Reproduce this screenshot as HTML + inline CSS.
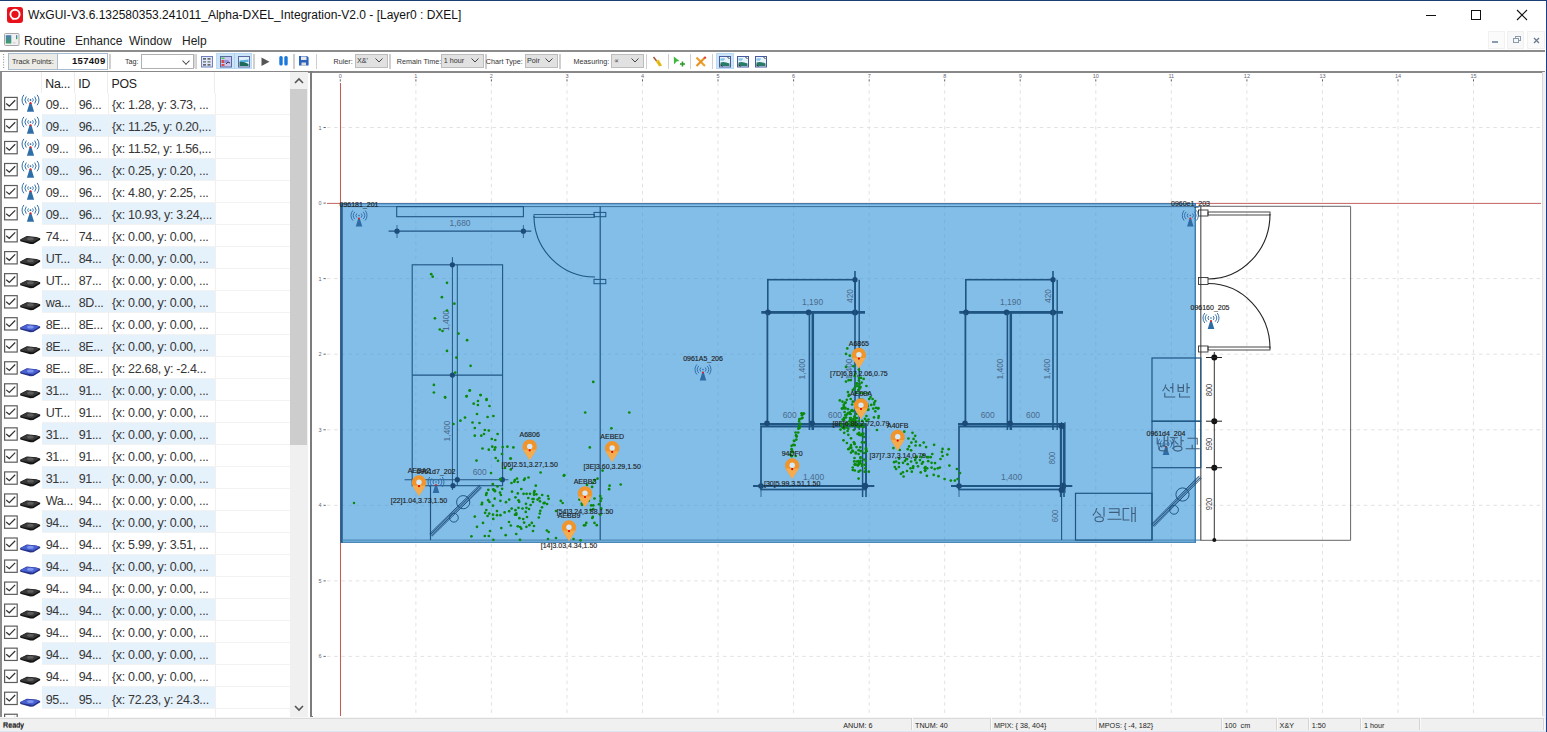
<!DOCTYPE html>
<html><head><meta charset="utf-8">
<style>
*{box-sizing:border-box}
html,body{margin:0;padding:0;width:1547px;height:732px;overflow:hidden;background:#fff;font-family:"Liberation Sans",sans-serif;color:#000}
.abs{position:absolute}
#titlebar{left:0;top:0;width:1547px;height:30px;background:#fff;border-top:1px solid #1c3f73}
#rborder{left:1546px;top:0;width:1px;height:732px;background:#1a3d8f}
.menu{position:absolute;top:34px;font-size:12px;color:#222}
.tb{position:absolute;font-size:7.2px;color:#333;top:57px}
.sep{position:absolute;top:54px;width:1px;height:15px;background:#c8c8c8}
.combo{position:absolute;top:54px;height:15px;background:#e1e1e1;border:1px solid #c4c4c4;font-size:7.2px;color:#222;padding:2px 0 0 2px}
.chev{position:absolute;right:4px;top:3px;width:6px;height:6px;border-right:1px solid #444;border-bottom:1px solid #444;transform:rotate(45deg) scale(.9)}
#list{left:2px;top:72px;width:288px;height:645px;overflow:hidden;background:#fff}
.row{position:absolute;left:0;width:288px;height:22.07px;font-size:11.5px;color:#222}
.row .hl{position:absolute;left:40px;top:0;width:173px;height:100%;background:#e5f1fb}
.row .t{position:absolute;top:4px;white-space:nowrap}
.cb{position:absolute;left:2px;top:5px;width:13px;height:13px;border:1px solid #333;background:#fff}
.cb:after{content:"";position:absolute;left:3px;top:0px;width:4px;height:8px;border-right:1.3px solid #333;border-bottom:1.3px solid #333;transform:rotate(45deg)}
.status{position:absolute;top:720px;font-size:7.2px;color:#222}
.ssep{position:absolute;top:718px;width:1px;height:12px;background:#d6d6d6}
</style></head><body>
<div id="titlebar" class="abs"></div>
<div id="rborder" class="abs"></div>
<!-- app icon -->
<svg class="abs" style="left:7px;top:7px" width="16" height="16"><rect x="0" y="0" width="16" height="16" rx="3" fill="#e8101a"/><circle cx="8" cy="7.3" r="4.6" fill="none" stroke="#fff" stroke-width="1.9"/><path d="M4.6,10.2 L5.8,13.3 L7.6,11.6Z" fill="#fff"/></svg>
<div class="abs" style="left:28px;top:7.5px;font-size:12px;color:#111;white-space:nowrap">WxGUI-V3.6.132580353.241011_Alpha-DXEL_Integration-V2.0 - [Layer0 : DXEL]</div>
<!-- window controls -->
<div class="abs" style="left:1426px;top:15px;width:10px;height:1px;background:#111"></div>
<div class="abs" style="left:1471px;top:10px;width:10px;height:10px;border:1px solid #111"></div>
<svg class="abs" style="left:1516px;top:9px" width="12" height="12"><path d="M1 1L11 11M11 1L1 11" stroke="#111" stroke-width="1.1"/></svg>

<!-- menu -->
<svg class="abs" style="left:4px;top:33px" width="16" height="13"><defs><linearGradient id="mg" x1="0" y1="0" x2="0" y2="1"><stop offset="0" stop-color="#4a7fb5"/><stop offset="1" stop-color="#3e9e62"/></linearGradient><linearGradient id="mg2" x1="0" y1="0" x2="0" y2="1"><stop offset="0" stop-color="#3a7ad0"/><stop offset="1" stop-color="#3eb040"/></linearGradient></defs><rect x="0.5" y="0.5" width="14.5" height="12" rx="1" fill="#f0f0f0" stroke="#a8a8a8"/><rect x="1.8" y="2.2" width="5.5" height="8.3" fill="url(#mg)"/><rect x="12" y="2.2" width="1.3" height="4" fill="url(#mg2)"/><rect x="9" y="9.5" width="2.5" height="0.8" fill="#bbb"/></svg>
<div class="menu" style="left:24px">Routine</div>
<div class="menu" style="left:75px">Enhance</div>
<div class="menu" style="left:129px">Window</div>
<div class="menu" style="left:182px">Help</div>
<div class="abs" style="left:1492px;top:41px;width:6px;height:2px;background:#8a9bb0"></div>
<div class="abs" style="left:1488px;top:31px;width:17px;height:18px;background:#fbfbfb;border:1px solid #f1f1f1"></div><div class="abs" style="left:1507px;top:31px;width:17px;height:18px;background:#f8f8f8;border:1px solid #f0f0f0"></div><div class="abs" style="left:1527px;top:31px;width:18px;height:18px;background:#fbfbfb;border:1px solid #f1f1f1"></div>
<div class="abs" style="left:1492px;top:41px;width:6px;height:2px;background:#8a9bb0"></div>
<svg class="abs" style="left:1513px;top:36px" width="9" height="8"><rect x="2.5" y="0.5" width="5" height="4" fill="none" stroke="#8a9bb0"/><rect x="0.5" y="2.5" width="5" height="4" fill="#f8f8f8" stroke="#8a9bb0"/></svg>
<svg class="abs" style="left:1533px;top:37px" width="7" height="7"><path d="M1 1L6 6M6 1L1 6" stroke="#6a7b90" stroke-width="1.3"/></svg>
<div class="abs" style="left:0;top:50px;width:1545px;height:2px;background:#8c8c8c"></div>

<!-- toolbar -->
<div class="abs" style="left:8px;top:53px;width:100px;height:17px;border:1px solid #a8bdd4;background:#fff"></div>
<div class="abs" style="left:9px;top:54px;width:49px;height:15px;background:#ecebe5;border-right:1px solid #a8bdd4"></div>
<div class="tb" style="left:12px">Track Points:</div>
<div class="abs" style="left:72px;top:55px;font-size:9.5px;font-weight:bold;color:#111;letter-spacing:.3px">157409</div>
<div class="sep" style="left:109px"></div>
<div class="tb" style="left:125px">Tag:</div>
<div class="abs" style="left:141px;top:54px;width:53px;height:15px;background:#fff;border:1px solid #b0b0b0"><div class="chev"></div></div>
<div class="sep" style="left:195px;background:#bbb"></div>
<svg class="abs" style="left:2px;top:53px" width="4" height="17"><g fill="#9a9a9a"><rect x="1" y="1.0" width="1.2" height="1"/><rect x="1" y="3.6" width="1.2" height="1"/><rect x="1" y="6.2" width="1.2" height="1"/><rect x="1" y="8.8" width="1.2" height="1"/><rect x="1" y="11.4" width="1.2" height="1"/><rect x="1" y="14.0" width="1.2" height="1"/></g></svg>
<div class="abs" style="left:109.2px;top:54px;width:1.5px;height:15px;background:#cfcfcf"></div>
<div class="abs" style="left:195.3px;top:54px;width:1.5px;height:15px;background:#cfcfcf"></div>
<div class="abs" style="left:193.8px;top:54px;width:2px;height:14px;background:#d8d8d8"></div>
<svg class="abs" style="left:201px;top:55.5px" width="12" height="12"><rect x="0.5" y="0.5" width="11" height="10.5" fill="#dfe8f8" stroke="#6f7fc0"/><g fill="#333"><rect x="2" y="2.3" width="3" height="1.2"/><rect x="6.5" y="2.3" width="3" height="1.2"/><rect x="2" y="5.3" width="3" height="1.2" fill="#666"/><rect x="6.5" y="5.3" width="3" height="1.2" fill="#666"/><rect x="2" y="8.3" width="3" height="1.2"/><rect x="6.5" y="8.3" width="3" height="1.2"/></g></svg>
<div class="abs" style="left:216px;top:52.8px;width:36px;height:16.6px;background:#cce4f7;border:1px solid #bbdaf5"></div>
<div class="abs" style="left:234.3px;top:53px;width:0.8px;height:16px;background:#b0d2f2"></div>
<svg class="abs" style="left:219.5px;top:55.5px" width="12" height="12"><rect x="0.5" y="0.5" width="11" height="10.5" fill="#c8c8f0" stroke="#5a6aa0"/><rect x="1.5" y="1.5" width="3" height="1.5" fill="#4ad04a"/><rect x="1.5" y="4" width="3" height="3" fill="#e04848"/><rect x="4.5" y="4" width="4" height="3" fill="#8a9ae8"/><rect x="1.5" y="8" width="3" height="2" fill="#e04848"/><path d="M6,8 L8,6 L10,7" stroke="#333" stroke-width="1" fill="none"/></svg>
<svg class="abs" style="left:237.5px;top:55.5px" width="12" height="12"><rect x="0.5" y="0.5" width="11" height="10.5" fill="#dff0fa" stroke="#5a6aa0"/><path d="M1.5,4.5 L10.5,3.5 L10.5,6 L1.5,6Z" fill="#5ab0e0"/><path d="M1.5,6 Q5,5 10.5,8 L10.5,10 L1.5,10Z" fill="#1e6a5a"/></svg>
<div class="abs" style="left:253.3px;top:54px;width:1.5px;height:15px;background:#cfcfcf"></div>
<svg class="abs" style="left:260.5px;top:56.5px" width="9" height="10"><path d="M0.5,0.5 L8.5,4.7 L0.5,9Z" fill="#555"/></svg>
<svg class="abs" style="left:278.5px;top:56.3px" width="10" height="10"><rect x="0.3" y="0" width="3.4" height="9.6" rx="1.5" fill="#1a78dc"/><rect x="5.3" y="0" width="3.4" height="9.6" rx="1.5" fill="#1a78dc"/></svg>
<div class="abs" style="left:293.3px;top:54px;width:1.5px;height:15px;background:#cfcfcf"></div>
<svg class="abs" style="left:299.3px;top:56.3px" width="10" height="10"><path d="M0,0 H8 L9.6,1.6 V9.6 H0Z" fill="#2a62c0"/><rect x="2" y="0.5" width="5.5" height="3.5" fill="#e8e8e8"/><rect x="2.5" y="6.5" width="4.5" height="3" fill="#ddd"/></svg>
<div class="abs" style="left:315.5px;top:54px;width:1.5px;height:15px;background:#cfcfcf"></div>
<div class="abs" style="left:333.5px;top:57px;font-size:7.2px;color:#333;white-space:nowrap">Ruler:</div>
<div class="abs" style="left:354.5px;top:53.5px;width:33.5px;height:14.5px;background:#e1e1e1;border:1px solid #bcbcbc"></div>
<div class="abs" style="left:357.0px;top:55.6px;font-size:7.2px;color:#333;white-space:nowrap">X&amp;'</div>
<svg class="abs" style="left:374px;top:57px" width="10" height="7"><path d="M1.5,1.5 L5,5 L8.5,1.5" stroke="#444" stroke-width="1" fill="none"/></svg>
<div class="abs" style="left:389.3px;top:54px;width:1.5px;height:15px;background:#cfcfcf"></div>
<div class="abs" style="left:396.8px;top:57px;font-size:7.2px;color:#333;white-space:nowrap">Remain Time:</div>
<div class="abs" style="left:441.3px;top:53.5px;width:42.69999999999999px;height:14.5px;background:#e1e1e1;border:1px solid #bcbcbc"></div>
<div class="abs" style="left:443.8px;top:55.6px;font-size:7.2px;color:#333;white-space:nowrap">1 hour</div>
<svg class="abs" style="left:470px;top:57px" width="10" height="7"><path d="M1.5,1.5 L5,5 L8.5,1.5" stroke="#444" stroke-width="1" fill="none"/></svg>
<div class="abs" style="left:485.2px;top:54px;width:1.5px;height:15px;background:#cfcfcf"></div>
<div class="abs" style="left:485.8px;top:57px;font-size:7.2px;color:#333;white-space:nowrap">Chart Type:</div>
<div class="abs" style="left:524.5px;top:53.5px;width:33.5px;height:14.5px;background:#e1e1e1;border:1px solid #bcbcbc"></div>
<div class="abs" style="left:527.0px;top:55.6px;font-size:7.2px;color:#333;white-space:nowrap">Poir</div>
<svg class="abs" style="left:544px;top:57px" width="10" height="7"><path d="M1.5,1.5 L5,5 L8.5,1.5" stroke="#444" stroke-width="1" fill="none"/></svg>
<div class="abs" style="left:559px;top:54px;width:1.5px;height:15px;background:#cfcfcf"></div>
<div class="abs" style="left:573.6px;top:57px;font-size:7.2px;color:#333;white-space:nowrap">Measuring:</div>
<div class="abs" style="left:611px;top:53.5px;width:33px;height:14.5px;background:#e1e1e1;border:1px solid #bcbcbc"></div>
<div class="abs" style="left:613.5px;top:55.6px;font-size:7.2px;color:#333;white-space:nowrap">∝</div>
<svg class="abs" style="left:630px;top:57px" width="10" height="7"><path d="M1.5,1.5 L5,5 L8.5,1.5" stroke="#444" stroke-width="1" fill="none"/></svg>
<div class="abs" style="left:645.8px;top:54px;width:1.5px;height:15px;background:#cfcfcf"></div>
<svg class="abs" style="left:651.5px;top:55.5px" width="11" height="11"><path d="M1.5,1 L5,5.5" stroke="#a0522d" stroke-width="1.4"/><path d="M3.5,5 L6.8,3.8 L10,9.5 L7,10.5 Z" fill="#e8c020"/><path d="M6,6 L9,10" stroke="#c8a010" stroke-width="0.6"/></svg>
<div class="abs" style="left:667.6px;top:54px;width:1.5px;height:15px;background:#cfcfcf"></div>
<svg class="abs" style="left:672.5px;top:56px" width="14" height="11"><path d="M0.8,0.5 L6.5,5 L3.5,5.5 L1,8.5Z" fill="#3cb83c"/><path d="M9.5,5.5 V10.5 M7,8 H12" stroke="#2a9a2a" stroke-width="1.6"/></svg>
<div class="abs" style="left:689.6px;top:54px;width:1.5px;height:15px;background:#cfcfcf"></div>
<svg class="abs" style="left:695.3px;top:55.5px" width="12" height="12"><path d="M1.5,1.5 L10,10" stroke="#f0a030" stroke-width="2.2"/><path d="M10,1.5 L1.5,10" stroke="#e89020" stroke-width="2.2"/><circle cx="10" cy="1.6" r="1.2" fill="#e04040"/></svg>
<div class="abs" style="left:711.8px;top:54px;width:1.5px;height:15px;background:#cfcfcf"></div>
<div class="abs" style="left:715.8px;top:52.7px;width:18px;height:16.3px;background:#cce4f7;border:1px solid #bbdaf5"></div>
<svg class="abs" style="left:719.2px;top:55.5px" width="12" height="12"><rect x="0.5" y="0.5" width="11" height="10.5" fill="#e8f4fb" stroke="#4a5aa0"/><path d="M1.5,3 H6 M1.5,4 H5" stroke="#5ab0e0" stroke-width="0.9"/><path d="M1.5,6.5 Q5,5 10.5,7.5 L10.5,10 L1.5,10Z" fill="#2a7a6a"/><path d="M8.5,1 L10.5,3 M1.5,9 L3.5,10.5" stroke="#222" stroke-width="0.9"/></svg>
<svg class="abs" style="left:737px;top:55.5px" width="12" height="12"><rect x="0.5" y="0.5" width="11" height="10.5" fill="#e8f4fb" stroke="#4a5aa0"/><path d="M1.5,3 H6 M1.5,4 H5" stroke="#5ab0e0" stroke-width="0.9"/><path d="M1.5,6.5 Q5,5 10.5,7.5 L10.5,10 L1.5,10Z" fill="#2a7a6a"/><path d="M8.5,1 L10.5,3 M1.5,9 L3.5,10.5" stroke="#222" stroke-width="0.9"/></svg>
<svg class="abs" style="left:754.8px;top:55.5px" width="12" height="12"><rect x="0.5" y="0.5" width="11" height="10.5" fill="#e8f4fb" stroke="#4a5aa0"/><path d="M1.5,3 H6 M1.5,4 H5" stroke="#5ab0e0" stroke-width="0.9"/><path d="M1.5,6.5 Q5,5 10.5,7.5 L10.5,10 L1.5,10Z" fill="#2a7a6a"/><path d="M8.5,1 L10.5,3 M1.5,9 L3.5,10.5" stroke="#222" stroke-width="0.9"/></svg>
<div class="abs" style="left:0;top:71px;width:1545px;height:2px;background:#888"></div>

<!-- left list -->
<div class="abs" style="left:0;top:72px;width:2px;height:645px;background:#8c8c8c"></div>
<div id="list" class="abs"></div><div class="abs" style="left:0;top:0;width:290px;height:717px;overflow:hidden"><div class="abs" style="left:2px;top:72px;width:288px;height:20.5px;background:#fff"></div>
<div class="abs" style="left:45.3px;top:77px;font-size:12.3px;letter-spacing:-0.2px;color:#222">Na...</div>
<div class="abs" style="left:78.3px;top:77px;font-size:12.3px;letter-spacing:-0.2px;color:#222">ID</div>
<div class="abs" style="left:111.5px;top:77px;font-size:12.3px;letter-spacing:-0.2px;color:#222">POS</div>
<div class="abs" style="left:41px;top:72px;width:1px;height:21px;background:#ececec"></div>
<div class="abs" style="left:74px;top:72px;width:1px;height:21px;background:#ececec"></div>
<div class="abs" style="left:107px;top:72px;width:1px;height:21px;background:#ececec"></div>
<div class="abs" style="left:214px;top:72px;width:1px;height:21px;background:#ececec"></div>
<div class="abs" style="left:42px;top:113.53px;width:248px;height:1px;background:#f2f2f2"></div>
<div class="abs" style="left:74.5px;top:92.50px;width:1px;height:22.03px;background:#f0f0f0"></div>
<div class="abs" style="left:107.5px;top:92.50px;width:1px;height:22.03px;background:#f0f0f0"></div>
<div class="abs" style="left:214.5px;top:92.50px;width:1px;height:22.03px;background:#f0f0f0"></div>
<div class="abs" style="left:45.7px;top:97.70px;font-size:12.5px;letter-spacing:-0.32px;color:#363636;white-space:nowrap">09...</div>
<div class="abs" style="left:78.7px;top:97.70px;font-size:12.5px;letter-spacing:-0.32px;color:#363636;white-space:nowrap">96...</div>
<div class="abs" style="left:112px;top:97.70px;font-size:12.5px;letter-spacing:-0.32px;color:#363636;white-space:nowrap">{x: 1.28, y: 3.73, ...</div>
<div class="abs" style="left:42px;top:114.53px;width:173px;height:22.03px;background:#e5f1fb"></div>
<div class="abs" style="left:42px;top:135.56px;width:248px;height:1px;background:#f2f2f2"></div>
<div class="abs" style="left:74.5px;top:114.53px;width:1px;height:22.03px;background:#f0f0f0"></div>
<div class="abs" style="left:107.5px;top:114.53px;width:1px;height:22.03px;background:#f0f0f0"></div>
<div class="abs" style="left:214.5px;top:114.53px;width:1px;height:22.03px;background:#f0f0f0"></div>
<div class="abs" style="left:45.7px;top:119.73px;font-size:12.5px;letter-spacing:-0.32px;color:#363636;white-space:nowrap">09...</div>
<div class="abs" style="left:78.7px;top:119.73px;font-size:12.5px;letter-spacing:-0.32px;color:#363636;white-space:nowrap">96...</div>
<div class="abs" style="left:112px;top:119.73px;font-size:12.5px;letter-spacing:-0.32px;color:#363636;white-space:nowrap">{x: 11.25, y: 0.20,...</div>
<div class="abs" style="left:42px;top:157.59px;width:248px;height:1px;background:#f2f2f2"></div>
<div class="abs" style="left:74.5px;top:136.56px;width:1px;height:22.03px;background:#f0f0f0"></div>
<div class="abs" style="left:107.5px;top:136.56px;width:1px;height:22.03px;background:#f0f0f0"></div>
<div class="abs" style="left:214.5px;top:136.56px;width:1px;height:22.03px;background:#f0f0f0"></div>
<div class="abs" style="left:45.7px;top:141.76px;font-size:12.5px;letter-spacing:-0.32px;color:#363636;white-space:nowrap">09...</div>
<div class="abs" style="left:78.7px;top:141.76px;font-size:12.5px;letter-spacing:-0.32px;color:#363636;white-space:nowrap">96...</div>
<div class="abs" style="left:112px;top:141.76px;font-size:12.5px;letter-spacing:-0.32px;color:#363636;white-space:nowrap">{x: 11.52, y: 1.56,...</div>
<div class="abs" style="left:42px;top:158.59px;width:173px;height:22.03px;background:#e5f1fb"></div>
<div class="abs" style="left:42px;top:179.62px;width:248px;height:1px;background:#f2f2f2"></div>
<div class="abs" style="left:74.5px;top:158.59px;width:1px;height:22.03px;background:#f0f0f0"></div>
<div class="abs" style="left:107.5px;top:158.59px;width:1px;height:22.03px;background:#f0f0f0"></div>
<div class="abs" style="left:214.5px;top:158.59px;width:1px;height:22.03px;background:#f0f0f0"></div>
<div class="abs" style="left:45.7px;top:163.79px;font-size:12.5px;letter-spacing:-0.32px;color:#363636;white-space:nowrap">09...</div>
<div class="abs" style="left:78.7px;top:163.79px;font-size:12.5px;letter-spacing:-0.32px;color:#363636;white-space:nowrap">96...</div>
<div class="abs" style="left:112px;top:163.79px;font-size:12.5px;letter-spacing:-0.32px;color:#363636;white-space:nowrap">{x: 0.25, y: 0.20, ...</div>
<div class="abs" style="left:42px;top:201.65px;width:248px;height:1px;background:#f2f2f2"></div>
<div class="abs" style="left:74.5px;top:180.62px;width:1px;height:22.03px;background:#f0f0f0"></div>
<div class="abs" style="left:107.5px;top:180.62px;width:1px;height:22.03px;background:#f0f0f0"></div>
<div class="abs" style="left:214.5px;top:180.62px;width:1px;height:22.03px;background:#f0f0f0"></div>
<div class="abs" style="left:45.7px;top:185.82px;font-size:12.5px;letter-spacing:-0.32px;color:#363636;white-space:nowrap">09...</div>
<div class="abs" style="left:78.7px;top:185.82px;font-size:12.5px;letter-spacing:-0.32px;color:#363636;white-space:nowrap">96...</div>
<div class="abs" style="left:112px;top:185.82px;font-size:12.5px;letter-spacing:-0.32px;color:#363636;white-space:nowrap">{x: 4.80, y: 2.25, ...</div>
<div class="abs" style="left:42px;top:202.65px;width:173px;height:22.03px;background:#e5f1fb"></div>
<div class="abs" style="left:42px;top:223.68px;width:248px;height:1px;background:#f2f2f2"></div>
<div class="abs" style="left:74.5px;top:202.65px;width:1px;height:22.03px;background:#f0f0f0"></div>
<div class="abs" style="left:107.5px;top:202.65px;width:1px;height:22.03px;background:#f0f0f0"></div>
<div class="abs" style="left:214.5px;top:202.65px;width:1px;height:22.03px;background:#f0f0f0"></div>
<div class="abs" style="left:45.7px;top:207.85px;font-size:12.5px;letter-spacing:-0.32px;color:#363636;white-space:nowrap">09...</div>
<div class="abs" style="left:78.7px;top:207.85px;font-size:12.5px;letter-spacing:-0.32px;color:#363636;white-space:nowrap">96...</div>
<div class="abs" style="left:112px;top:207.85px;font-size:12.5px;letter-spacing:-0.32px;color:#363636;white-space:nowrap">{x: 10.93, y: 3.24,...</div>
<div class="abs" style="left:42px;top:245.71px;width:248px;height:1px;background:#f2f2f2"></div>
<div class="abs" style="left:74.5px;top:224.68px;width:1px;height:22.03px;background:#f0f0f0"></div>
<div class="abs" style="left:107.5px;top:224.68px;width:1px;height:22.03px;background:#f0f0f0"></div>
<div class="abs" style="left:214.5px;top:224.68px;width:1px;height:22.03px;background:#f0f0f0"></div>
<div class="abs" style="left:45.7px;top:229.88px;font-size:12.5px;letter-spacing:-0.32px;color:#363636;white-space:nowrap">74...</div>
<div class="abs" style="left:78.7px;top:229.88px;font-size:12.5px;letter-spacing:-0.32px;color:#363636;white-space:nowrap">74...</div>
<div class="abs" style="left:112px;top:229.88px;font-size:12.5px;letter-spacing:-0.32px;color:#363636;white-space:nowrap">{x: 0.00, y: 0.00, ...</div>
<div class="abs" style="left:42px;top:246.71px;width:173px;height:22.03px;background:#e5f1fb"></div>
<div class="abs" style="left:42px;top:267.74px;width:248px;height:1px;background:#f2f2f2"></div>
<div class="abs" style="left:74.5px;top:246.71px;width:1px;height:22.03px;background:#f0f0f0"></div>
<div class="abs" style="left:107.5px;top:246.71px;width:1px;height:22.03px;background:#f0f0f0"></div>
<div class="abs" style="left:214.5px;top:246.71px;width:1px;height:22.03px;background:#f0f0f0"></div>
<div class="abs" style="left:45.7px;top:251.91px;font-size:12.5px;letter-spacing:-0.32px;color:#363636;white-space:nowrap">UT...</div>
<div class="abs" style="left:78.7px;top:251.91px;font-size:12.5px;letter-spacing:-0.32px;color:#363636;white-space:nowrap">84...</div>
<div class="abs" style="left:112px;top:251.91px;font-size:12.5px;letter-spacing:-0.32px;color:#363636;white-space:nowrap">{x: 0.00, y: 0.00, ...</div>
<div class="abs" style="left:42px;top:289.77px;width:248px;height:1px;background:#f2f2f2"></div>
<div class="abs" style="left:74.5px;top:268.74px;width:1px;height:22.03px;background:#f0f0f0"></div>
<div class="abs" style="left:107.5px;top:268.74px;width:1px;height:22.03px;background:#f0f0f0"></div>
<div class="abs" style="left:214.5px;top:268.74px;width:1px;height:22.03px;background:#f0f0f0"></div>
<div class="abs" style="left:45.7px;top:273.94px;font-size:12.5px;letter-spacing:-0.32px;color:#363636;white-space:nowrap">UT...</div>
<div class="abs" style="left:78.7px;top:273.94px;font-size:12.5px;letter-spacing:-0.32px;color:#363636;white-space:nowrap">87...</div>
<div class="abs" style="left:112px;top:273.94px;font-size:12.5px;letter-spacing:-0.32px;color:#363636;white-space:nowrap">{x: 0.00, y: 0.00, ...</div>
<div class="abs" style="left:42px;top:290.77px;width:173px;height:22.03px;background:#e5f1fb"></div>
<div class="abs" style="left:42px;top:311.80px;width:248px;height:1px;background:#f2f2f2"></div>
<div class="abs" style="left:74.5px;top:290.77px;width:1px;height:22.03px;background:#f0f0f0"></div>
<div class="abs" style="left:107.5px;top:290.77px;width:1px;height:22.03px;background:#f0f0f0"></div>
<div class="abs" style="left:214.5px;top:290.77px;width:1px;height:22.03px;background:#f0f0f0"></div>
<div class="abs" style="left:45.7px;top:295.97px;font-size:12.5px;letter-spacing:-0.32px;color:#363636;white-space:nowrap">wa...</div>
<div class="abs" style="left:78.7px;top:295.97px;font-size:12.5px;letter-spacing:-0.32px;color:#363636;white-space:nowrap">8D...</div>
<div class="abs" style="left:112px;top:295.97px;font-size:12.5px;letter-spacing:-0.32px;color:#363636;white-space:nowrap">{x: 0.00, y: 0.00, ...</div>
<div class="abs" style="left:42px;top:333.83px;width:248px;height:1px;background:#f2f2f2"></div>
<div class="abs" style="left:74.5px;top:312.80px;width:1px;height:22.03px;background:#f0f0f0"></div>
<div class="abs" style="left:107.5px;top:312.80px;width:1px;height:22.03px;background:#f0f0f0"></div>
<div class="abs" style="left:214.5px;top:312.80px;width:1px;height:22.03px;background:#f0f0f0"></div>
<div class="abs" style="left:45.7px;top:318.00px;font-size:12.5px;letter-spacing:-0.32px;color:#363636;white-space:nowrap">8E...</div>
<div class="abs" style="left:78.7px;top:318.00px;font-size:12.5px;letter-spacing:-0.32px;color:#363636;white-space:nowrap">8E...</div>
<div class="abs" style="left:112px;top:318.00px;font-size:12.5px;letter-spacing:-0.32px;color:#363636;white-space:nowrap">{x: 0.00, y: 0.00, ...</div>
<div class="abs" style="left:42px;top:334.83px;width:173px;height:22.03px;background:#e5f1fb"></div>
<div class="abs" style="left:42px;top:355.86px;width:248px;height:1px;background:#f2f2f2"></div>
<div class="abs" style="left:74.5px;top:334.83px;width:1px;height:22.03px;background:#f0f0f0"></div>
<div class="abs" style="left:107.5px;top:334.83px;width:1px;height:22.03px;background:#f0f0f0"></div>
<div class="abs" style="left:214.5px;top:334.83px;width:1px;height:22.03px;background:#f0f0f0"></div>
<div class="abs" style="left:45.7px;top:340.03px;font-size:12.5px;letter-spacing:-0.32px;color:#363636;white-space:nowrap">8E...</div>
<div class="abs" style="left:78.7px;top:340.03px;font-size:12.5px;letter-spacing:-0.32px;color:#363636;white-space:nowrap">8E...</div>
<div class="abs" style="left:112px;top:340.03px;font-size:12.5px;letter-spacing:-0.32px;color:#363636;white-space:nowrap">{x: 0.00, y: 0.00, ...</div>
<div class="abs" style="left:42px;top:377.89px;width:248px;height:1px;background:#f2f2f2"></div>
<div class="abs" style="left:74.5px;top:356.86px;width:1px;height:22.03px;background:#f0f0f0"></div>
<div class="abs" style="left:107.5px;top:356.86px;width:1px;height:22.03px;background:#f0f0f0"></div>
<div class="abs" style="left:214.5px;top:356.86px;width:1px;height:22.03px;background:#f0f0f0"></div>
<div class="abs" style="left:45.7px;top:362.06px;font-size:12.5px;letter-spacing:-0.32px;color:#363636;white-space:nowrap">8E...</div>
<div class="abs" style="left:78.7px;top:362.06px;font-size:12.5px;letter-spacing:-0.32px;color:#363636;white-space:nowrap">8E...</div>
<div class="abs" style="left:112px;top:362.06px;font-size:12.5px;letter-spacing:-0.32px;color:#363636;white-space:nowrap">{x: 22.68, y: -2.4...</div>
<div class="abs" style="left:42px;top:378.89px;width:173px;height:22.03px;background:#e5f1fb"></div>
<div class="abs" style="left:42px;top:399.92px;width:248px;height:1px;background:#f2f2f2"></div>
<div class="abs" style="left:74.5px;top:378.89px;width:1px;height:22.03px;background:#f0f0f0"></div>
<div class="abs" style="left:107.5px;top:378.89px;width:1px;height:22.03px;background:#f0f0f0"></div>
<div class="abs" style="left:214.5px;top:378.89px;width:1px;height:22.03px;background:#f0f0f0"></div>
<div class="abs" style="left:45.7px;top:384.09px;font-size:12.5px;letter-spacing:-0.32px;color:#363636;white-space:nowrap">31...</div>
<div class="abs" style="left:78.7px;top:384.09px;font-size:12.5px;letter-spacing:-0.32px;color:#363636;white-space:nowrap">91...</div>
<div class="abs" style="left:112px;top:384.09px;font-size:12.5px;letter-spacing:-0.32px;color:#363636;white-space:nowrap">{x: 0.00, y: 0.00, ...</div>
<div class="abs" style="left:42px;top:421.95px;width:248px;height:1px;background:#f2f2f2"></div>
<div class="abs" style="left:74.5px;top:400.92px;width:1px;height:22.03px;background:#f0f0f0"></div>
<div class="abs" style="left:107.5px;top:400.92px;width:1px;height:22.03px;background:#f0f0f0"></div>
<div class="abs" style="left:214.5px;top:400.92px;width:1px;height:22.03px;background:#f0f0f0"></div>
<div class="abs" style="left:45.7px;top:406.12px;font-size:12.5px;letter-spacing:-0.32px;color:#363636;white-space:nowrap">UT...</div>
<div class="abs" style="left:78.7px;top:406.12px;font-size:12.5px;letter-spacing:-0.32px;color:#363636;white-space:nowrap">91...</div>
<div class="abs" style="left:112px;top:406.12px;font-size:12.5px;letter-spacing:-0.32px;color:#363636;white-space:nowrap">{x: 0.00, y: 0.00, ...</div>
<div class="abs" style="left:42px;top:422.95px;width:173px;height:22.03px;background:#e5f1fb"></div>
<div class="abs" style="left:42px;top:443.98px;width:248px;height:1px;background:#f2f2f2"></div>
<div class="abs" style="left:74.5px;top:422.95px;width:1px;height:22.03px;background:#f0f0f0"></div>
<div class="abs" style="left:107.5px;top:422.95px;width:1px;height:22.03px;background:#f0f0f0"></div>
<div class="abs" style="left:214.5px;top:422.95px;width:1px;height:22.03px;background:#f0f0f0"></div>
<div class="abs" style="left:45.7px;top:428.15px;font-size:12.5px;letter-spacing:-0.32px;color:#363636;white-space:nowrap">31...</div>
<div class="abs" style="left:78.7px;top:428.15px;font-size:12.5px;letter-spacing:-0.32px;color:#363636;white-space:nowrap">91...</div>
<div class="abs" style="left:112px;top:428.15px;font-size:12.5px;letter-spacing:-0.32px;color:#363636;white-space:nowrap">{x: 0.00, y: 0.00, ...</div>
<div class="abs" style="left:42px;top:466.01px;width:248px;height:1px;background:#f2f2f2"></div>
<div class="abs" style="left:74.5px;top:444.98px;width:1px;height:22.03px;background:#f0f0f0"></div>
<div class="abs" style="left:107.5px;top:444.98px;width:1px;height:22.03px;background:#f0f0f0"></div>
<div class="abs" style="left:214.5px;top:444.98px;width:1px;height:22.03px;background:#f0f0f0"></div>
<div class="abs" style="left:45.7px;top:450.18px;font-size:12.5px;letter-spacing:-0.32px;color:#363636;white-space:nowrap">31...</div>
<div class="abs" style="left:78.7px;top:450.18px;font-size:12.5px;letter-spacing:-0.32px;color:#363636;white-space:nowrap">91...</div>
<div class="abs" style="left:112px;top:450.18px;font-size:12.5px;letter-spacing:-0.32px;color:#363636;white-space:nowrap">{x: 0.00, y: 0.00, ...</div>
<div class="abs" style="left:42px;top:467.01px;width:173px;height:22.03px;background:#e5f1fb"></div>
<div class="abs" style="left:42px;top:488.04px;width:248px;height:1px;background:#f2f2f2"></div>
<div class="abs" style="left:74.5px;top:467.01px;width:1px;height:22.03px;background:#f0f0f0"></div>
<div class="abs" style="left:107.5px;top:467.01px;width:1px;height:22.03px;background:#f0f0f0"></div>
<div class="abs" style="left:214.5px;top:467.01px;width:1px;height:22.03px;background:#f0f0f0"></div>
<div class="abs" style="left:45.7px;top:472.21px;font-size:12.5px;letter-spacing:-0.32px;color:#363636;white-space:nowrap">31...</div>
<div class="abs" style="left:78.7px;top:472.21px;font-size:12.5px;letter-spacing:-0.32px;color:#363636;white-space:nowrap">91...</div>
<div class="abs" style="left:112px;top:472.21px;font-size:12.5px;letter-spacing:-0.32px;color:#363636;white-space:nowrap">{x: 0.00, y: 0.00, ...</div>
<div class="abs" style="left:42px;top:510.07px;width:248px;height:1px;background:#f2f2f2"></div>
<div class="abs" style="left:74.5px;top:489.04px;width:1px;height:22.03px;background:#f0f0f0"></div>
<div class="abs" style="left:107.5px;top:489.04px;width:1px;height:22.03px;background:#f0f0f0"></div>
<div class="abs" style="left:214.5px;top:489.04px;width:1px;height:22.03px;background:#f0f0f0"></div>
<div class="abs" style="left:45.7px;top:494.24px;font-size:12.5px;letter-spacing:-0.32px;color:#363636;white-space:nowrap">Wa...</div>
<div class="abs" style="left:78.7px;top:494.24px;font-size:12.5px;letter-spacing:-0.32px;color:#363636;white-space:nowrap">94...</div>
<div class="abs" style="left:112px;top:494.24px;font-size:12.5px;letter-spacing:-0.32px;color:#363636;white-space:nowrap">{x: 0.00, y: 0.00, ...</div>
<div class="abs" style="left:42px;top:511.07px;width:173px;height:22.03px;background:#e5f1fb"></div>
<div class="abs" style="left:42px;top:532.10px;width:248px;height:1px;background:#f2f2f2"></div>
<div class="abs" style="left:74.5px;top:511.07px;width:1px;height:22.03px;background:#f0f0f0"></div>
<div class="abs" style="left:107.5px;top:511.07px;width:1px;height:22.03px;background:#f0f0f0"></div>
<div class="abs" style="left:214.5px;top:511.07px;width:1px;height:22.03px;background:#f0f0f0"></div>
<div class="abs" style="left:45.7px;top:516.27px;font-size:12.5px;letter-spacing:-0.32px;color:#363636;white-space:nowrap">94...</div>
<div class="abs" style="left:78.7px;top:516.27px;font-size:12.5px;letter-spacing:-0.32px;color:#363636;white-space:nowrap">94...</div>
<div class="abs" style="left:112px;top:516.27px;font-size:12.5px;letter-spacing:-0.32px;color:#363636;white-space:nowrap">{x: 0.00, y: 0.00, ...</div>
<div class="abs" style="left:42px;top:554.13px;width:248px;height:1px;background:#f2f2f2"></div>
<div class="abs" style="left:74.5px;top:533.10px;width:1px;height:22.03px;background:#f0f0f0"></div>
<div class="abs" style="left:107.5px;top:533.10px;width:1px;height:22.03px;background:#f0f0f0"></div>
<div class="abs" style="left:214.5px;top:533.10px;width:1px;height:22.03px;background:#f0f0f0"></div>
<div class="abs" style="left:45.7px;top:538.30px;font-size:12.5px;letter-spacing:-0.32px;color:#363636;white-space:nowrap">94...</div>
<div class="abs" style="left:78.7px;top:538.30px;font-size:12.5px;letter-spacing:-0.32px;color:#363636;white-space:nowrap">94...</div>
<div class="abs" style="left:112px;top:538.30px;font-size:12.5px;letter-spacing:-0.32px;color:#363636;white-space:nowrap">{x: 5.99, y: 3.51, ...</div>
<div class="abs" style="left:42px;top:555.13px;width:173px;height:22.03px;background:#e5f1fb"></div>
<div class="abs" style="left:42px;top:576.16px;width:248px;height:1px;background:#f2f2f2"></div>
<div class="abs" style="left:74.5px;top:555.13px;width:1px;height:22.03px;background:#f0f0f0"></div>
<div class="abs" style="left:107.5px;top:555.13px;width:1px;height:22.03px;background:#f0f0f0"></div>
<div class="abs" style="left:214.5px;top:555.13px;width:1px;height:22.03px;background:#f0f0f0"></div>
<div class="abs" style="left:45.7px;top:560.33px;font-size:12.5px;letter-spacing:-0.32px;color:#363636;white-space:nowrap">94...</div>
<div class="abs" style="left:78.7px;top:560.33px;font-size:12.5px;letter-spacing:-0.32px;color:#363636;white-space:nowrap">94...</div>
<div class="abs" style="left:112px;top:560.33px;font-size:12.5px;letter-spacing:-0.32px;color:#363636;white-space:nowrap">{x: 0.00, y: 0.00, ...</div>
<div class="abs" style="left:42px;top:598.19px;width:248px;height:1px;background:#f2f2f2"></div>
<div class="abs" style="left:74.5px;top:577.16px;width:1px;height:22.03px;background:#f0f0f0"></div>
<div class="abs" style="left:107.5px;top:577.16px;width:1px;height:22.03px;background:#f0f0f0"></div>
<div class="abs" style="left:214.5px;top:577.16px;width:1px;height:22.03px;background:#f0f0f0"></div>
<div class="abs" style="left:45.7px;top:582.36px;font-size:12.5px;letter-spacing:-0.32px;color:#363636;white-space:nowrap">94...</div>
<div class="abs" style="left:78.7px;top:582.36px;font-size:12.5px;letter-spacing:-0.32px;color:#363636;white-space:nowrap">94...</div>
<div class="abs" style="left:112px;top:582.36px;font-size:12.5px;letter-spacing:-0.32px;color:#363636;white-space:nowrap">{x: 0.00, y: 0.00, ...</div>
<div class="abs" style="left:42px;top:599.19px;width:173px;height:22.03px;background:#e5f1fb"></div>
<div class="abs" style="left:42px;top:620.22px;width:248px;height:1px;background:#f2f2f2"></div>
<div class="abs" style="left:74.5px;top:599.19px;width:1px;height:22.03px;background:#f0f0f0"></div>
<div class="abs" style="left:107.5px;top:599.19px;width:1px;height:22.03px;background:#f0f0f0"></div>
<div class="abs" style="left:214.5px;top:599.19px;width:1px;height:22.03px;background:#f0f0f0"></div>
<div class="abs" style="left:45.7px;top:604.39px;font-size:12.5px;letter-spacing:-0.32px;color:#363636;white-space:nowrap">94...</div>
<div class="abs" style="left:78.7px;top:604.39px;font-size:12.5px;letter-spacing:-0.32px;color:#363636;white-space:nowrap">94...</div>
<div class="abs" style="left:112px;top:604.39px;font-size:12.5px;letter-spacing:-0.32px;color:#363636;white-space:nowrap">{x: 0.00, y: 0.00, ...</div>
<div class="abs" style="left:42px;top:642.25px;width:248px;height:1px;background:#f2f2f2"></div>
<div class="abs" style="left:74.5px;top:621.22px;width:1px;height:22.03px;background:#f0f0f0"></div>
<div class="abs" style="left:107.5px;top:621.22px;width:1px;height:22.03px;background:#f0f0f0"></div>
<div class="abs" style="left:214.5px;top:621.22px;width:1px;height:22.03px;background:#f0f0f0"></div>
<div class="abs" style="left:45.7px;top:626.42px;font-size:12.5px;letter-spacing:-0.32px;color:#363636;white-space:nowrap">94...</div>
<div class="abs" style="left:78.7px;top:626.42px;font-size:12.5px;letter-spacing:-0.32px;color:#363636;white-space:nowrap">94...</div>
<div class="abs" style="left:112px;top:626.42px;font-size:12.5px;letter-spacing:-0.32px;color:#363636;white-space:nowrap">{x: 0.00, y: 0.00, ...</div>
<div class="abs" style="left:42px;top:643.25px;width:173px;height:22.03px;background:#e5f1fb"></div>
<div class="abs" style="left:42px;top:664.28px;width:248px;height:1px;background:#f2f2f2"></div>
<div class="abs" style="left:74.5px;top:643.25px;width:1px;height:22.03px;background:#f0f0f0"></div>
<div class="abs" style="left:107.5px;top:643.25px;width:1px;height:22.03px;background:#f0f0f0"></div>
<div class="abs" style="left:214.5px;top:643.25px;width:1px;height:22.03px;background:#f0f0f0"></div>
<div class="abs" style="left:45.7px;top:648.45px;font-size:12.5px;letter-spacing:-0.32px;color:#363636;white-space:nowrap">94...</div>
<div class="abs" style="left:78.7px;top:648.45px;font-size:12.5px;letter-spacing:-0.32px;color:#363636;white-space:nowrap">94...</div>
<div class="abs" style="left:112px;top:648.45px;font-size:12.5px;letter-spacing:-0.32px;color:#363636;white-space:nowrap">{x: 0.00, y: 0.00, ...</div>
<div class="abs" style="left:42px;top:686.31px;width:248px;height:1px;background:#f2f2f2"></div>
<div class="abs" style="left:74.5px;top:665.28px;width:1px;height:22.03px;background:#f0f0f0"></div>
<div class="abs" style="left:107.5px;top:665.28px;width:1px;height:22.03px;background:#f0f0f0"></div>
<div class="abs" style="left:214.5px;top:665.28px;width:1px;height:22.03px;background:#f0f0f0"></div>
<div class="abs" style="left:45.7px;top:670.48px;font-size:12.5px;letter-spacing:-0.32px;color:#363636;white-space:nowrap">94...</div>
<div class="abs" style="left:78.7px;top:670.48px;font-size:12.5px;letter-spacing:-0.32px;color:#363636;white-space:nowrap">94...</div>
<div class="abs" style="left:112px;top:670.48px;font-size:12.5px;letter-spacing:-0.32px;color:#363636;white-space:nowrap">{x: 0.00, y: 0.00, ...</div>
<div class="abs" style="left:42px;top:687.31px;width:173px;height:22.03px;background:#e5f1fb"></div>
<div class="abs" style="left:42px;top:708.34px;width:248px;height:1px;background:#f2f2f2"></div>
<div class="abs" style="left:74.5px;top:687.31px;width:1px;height:22.03px;background:#f0f0f0"></div>
<div class="abs" style="left:107.5px;top:687.31px;width:1px;height:22.03px;background:#f0f0f0"></div>
<div class="abs" style="left:214.5px;top:687.31px;width:1px;height:22.03px;background:#f0f0f0"></div>
<div class="abs" style="left:45.7px;top:692.51px;font-size:12.5px;letter-spacing:-0.32px;color:#363636;white-space:nowrap">95...</div>
<div class="abs" style="left:78.7px;top:692.51px;font-size:12.5px;letter-spacing:-0.32px;color:#363636;white-space:nowrap">95...</div>
<div class="abs" style="left:112px;top:692.51px;font-size:12.5px;letter-spacing:-0.32px;color:#363636;white-space:nowrap">{x: 72.23, y: 24.3...</div>
<div class="abs" style="left:42px;top:730.37px;width:248px;height:1px;background:#f2f2f2"></div>
<div class="abs" style="left:74.5px;top:709.34px;width:1px;height:22.03px;background:#f0f0f0"></div>
<div class="abs" style="left:107.5px;top:709.34px;width:1px;height:22.03px;background:#f0f0f0"></div>
<div class="abs" style="left:214.5px;top:709.34px;width:1px;height:22.03px;background:#f0f0f0"></div>
<svg class="abs" style="left:0;top:0;overflow:visible" width="1" height="1"><g transform="translate(4,96.80)"><rect x="0.6" y="0.6" width="12.6" height="12.3" fill="#fff" stroke="#5c5c5c" stroke-width="1.2"/><path d="M2.2,6.7 L5.3,9.3 L11.2,3.4" fill="none" stroke="#333" stroke-width="1.25"/></g><g transform="translate(30.5,100.0) scale(1.0)">
<path d="M-4.2,-3.5 A5.5,5.5 0 0,0 -4.2,3.5 M4.2,-3.5 A5.5,5.5 0 0,1 4.2,3.5" stroke="#2f6fa8" stroke-width="1" fill="none"/>
<path d="M-6.6,-5.2 A8.2,8.2 0 0,0 -6.6,5.2 M6.6,-5.2 A8.2,8.2 0 0,1 6.6,5.2" stroke="#2f6fa8" stroke-width="1" fill="none"/>
<path d="M-2,-1.8 A2.6,2.6 0 0,0 -2,1.8 M2,-1.8 A2.6,2.6 0 0,1 2,1.8" stroke="#2f6fa8" stroke-width="0.9" fill="none"/>
<circle cx="0" cy="0" r="0.9" fill="#2f6fa8"/>
<path d="M-0.9,3 L0.9,3 L3.6,11.7 L-3.6,11.7Z" fill="#2f6fa8"/>
<circle cx="0" cy="3.2" r="1.1" fill="#e02020"/>
</g><g transform="translate(4,118.83)"><rect x="0.6" y="0.6" width="12.6" height="12.3" fill="#fff" stroke="#5c5c5c" stroke-width="1.2"/><path d="M2.2,6.7 L5.3,9.3 L11.2,3.4" fill="none" stroke="#333" stroke-width="1.25"/></g><g transform="translate(30.5,122.03) scale(1.0)">
<path d="M-4.2,-3.5 A5.5,5.5 0 0,0 -4.2,3.5 M4.2,-3.5 A5.5,5.5 0 0,1 4.2,3.5" stroke="#2f6fa8" stroke-width="1" fill="none"/>
<path d="M-6.6,-5.2 A8.2,8.2 0 0,0 -6.6,5.2 M6.6,-5.2 A8.2,8.2 0 0,1 6.6,5.2" stroke="#2f6fa8" stroke-width="1" fill="none"/>
<path d="M-2,-1.8 A2.6,2.6 0 0,0 -2,1.8 M2,-1.8 A2.6,2.6 0 0,1 2,1.8" stroke="#2f6fa8" stroke-width="0.9" fill="none"/>
<circle cx="0" cy="0" r="0.9" fill="#2f6fa8"/>
<path d="M-0.9,3 L0.9,3 L3.6,11.7 L-3.6,11.7Z" fill="#2f6fa8"/>
<circle cx="0" cy="3.2" r="1.1" fill="#e02020"/>
</g><g transform="translate(4,140.86)"><rect x="0.6" y="0.6" width="12.6" height="12.3" fill="#fff" stroke="#5c5c5c" stroke-width="1.2"/><path d="M2.2,6.7 L5.3,9.3 L11.2,3.4" fill="none" stroke="#333" stroke-width="1.25"/></g><g transform="translate(30.5,144.06) scale(1.0)">
<path d="M-4.2,-3.5 A5.5,5.5 0 0,0 -4.2,3.5 M4.2,-3.5 A5.5,5.5 0 0,1 4.2,3.5" stroke="#2f6fa8" stroke-width="1" fill="none"/>
<path d="M-6.6,-5.2 A8.2,8.2 0 0,0 -6.6,5.2 M6.6,-5.2 A8.2,8.2 0 0,1 6.6,5.2" stroke="#2f6fa8" stroke-width="1" fill="none"/>
<path d="M-2,-1.8 A2.6,2.6 0 0,0 -2,1.8 M2,-1.8 A2.6,2.6 0 0,1 2,1.8" stroke="#2f6fa8" stroke-width="0.9" fill="none"/>
<circle cx="0" cy="0" r="0.9" fill="#2f6fa8"/>
<path d="M-0.9,3 L0.9,3 L3.6,11.7 L-3.6,11.7Z" fill="#2f6fa8"/>
<circle cx="0" cy="3.2" r="1.1" fill="#e02020"/>
</g><g transform="translate(4,162.89)"><rect x="0.6" y="0.6" width="12.6" height="12.3" fill="#fff" stroke="#5c5c5c" stroke-width="1.2"/><path d="M2.2,6.7 L5.3,9.3 L11.2,3.4" fill="none" stroke="#333" stroke-width="1.25"/></g><g transform="translate(30.5,166.09) scale(1.0)">
<path d="M-4.2,-3.5 A5.5,5.5 0 0,0 -4.2,3.5 M4.2,-3.5 A5.5,5.5 0 0,1 4.2,3.5" stroke="#2f6fa8" stroke-width="1" fill="none"/>
<path d="M-6.6,-5.2 A8.2,8.2 0 0,0 -6.6,5.2 M6.6,-5.2 A8.2,8.2 0 0,1 6.6,5.2" stroke="#2f6fa8" stroke-width="1" fill="none"/>
<path d="M-2,-1.8 A2.6,2.6 0 0,0 -2,1.8 M2,-1.8 A2.6,2.6 0 0,1 2,1.8" stroke="#2f6fa8" stroke-width="0.9" fill="none"/>
<circle cx="0" cy="0" r="0.9" fill="#2f6fa8"/>
<path d="M-0.9,3 L0.9,3 L3.6,11.7 L-3.6,11.7Z" fill="#2f6fa8"/>
<circle cx="0" cy="3.2" r="1.1" fill="#e02020"/>
</g><g transform="translate(4,184.92)"><rect x="0.6" y="0.6" width="12.6" height="12.3" fill="#fff" stroke="#5c5c5c" stroke-width="1.2"/><path d="M2.2,6.7 L5.3,9.3 L11.2,3.4" fill="none" stroke="#333" stroke-width="1.25"/></g><g transform="translate(30.5,188.12) scale(1.0)">
<path d="M-4.2,-3.5 A5.5,5.5 0 0,0 -4.2,3.5 M4.2,-3.5 A5.5,5.5 0 0,1 4.2,3.5" stroke="#2f6fa8" stroke-width="1" fill="none"/>
<path d="M-6.6,-5.2 A8.2,8.2 0 0,0 -6.6,5.2 M6.6,-5.2 A8.2,8.2 0 0,1 6.6,5.2" stroke="#2f6fa8" stroke-width="1" fill="none"/>
<path d="M-2,-1.8 A2.6,2.6 0 0,0 -2,1.8 M2,-1.8 A2.6,2.6 0 0,1 2,1.8" stroke="#2f6fa8" stroke-width="0.9" fill="none"/>
<circle cx="0" cy="0" r="0.9" fill="#2f6fa8"/>
<path d="M-0.9,3 L0.9,3 L3.6,11.7 L-3.6,11.7Z" fill="#2f6fa8"/>
<circle cx="0" cy="3.2" r="1.1" fill="#e02020"/>
</g><g transform="translate(4,206.95)"><rect x="0.6" y="0.6" width="12.6" height="12.3" fill="#fff" stroke="#5c5c5c" stroke-width="1.2"/><path d="M2.2,6.7 L5.3,9.3 L11.2,3.4" fill="none" stroke="#333" stroke-width="1.25"/></g><g transform="translate(30.5,210.15) scale(1.0)">
<path d="M-4.2,-3.5 A5.5,5.5 0 0,0 -4.2,3.5 M4.2,-3.5 A5.5,5.5 0 0,1 4.2,3.5" stroke="#2f6fa8" stroke-width="1" fill="none"/>
<path d="M-6.6,-5.2 A8.2,8.2 0 0,0 -6.6,5.2 M6.6,-5.2 A8.2,8.2 0 0,1 6.6,5.2" stroke="#2f6fa8" stroke-width="1" fill="none"/>
<path d="M-2,-1.8 A2.6,2.6 0 0,0 -2,1.8 M2,-1.8 A2.6,2.6 0 0,1 2,1.8" stroke="#2f6fa8" stroke-width="0.9" fill="none"/>
<circle cx="0" cy="0" r="0.9" fill="#2f6fa8"/>
<path d="M-0.9,3 L0.9,3 L3.6,11.7 L-3.6,11.7Z" fill="#2f6fa8"/>
<circle cx="0" cy="3.2" r="1.1" fill="#e02020"/>
</g><g transform="translate(4,228.98)"><rect x="0.6" y="0.6" width="12.6" height="12.3" fill="#fff" stroke="#5c5c5c" stroke-width="1.2"/><path d="M2.2,6.7 L5.3,9.3 L11.2,3.4" fill="none" stroke="#333" stroke-width="1.25"/></g><g transform="translate(19.8,235.88)"><path d="M0.3,3.6 L7,0.2 L16.5,1.1 L20.4,2.4 L20.4,3.8 L13.5,8 L10.5,8.2 L0.5,5.4Z" fill="#141414"/><path d="M0.9,3.6 L7.2,0.7 L16.3,1.5 L19.6,2.6 L13,6.4 L2,4.7Z" fill="#383838"/><ellipse cx="10.6" cy="2.9" rx="3.3" ry="1.5" fill="#5e5e5e"/></g><g transform="translate(4,251.01)"><rect x="0.6" y="0.6" width="12.6" height="12.3" fill="#fff" stroke="#5c5c5c" stroke-width="1.2"/><path d="M2.2,6.7 L5.3,9.3 L11.2,3.4" fill="none" stroke="#333" stroke-width="1.25"/></g><g transform="translate(19.8,257.91)"><path d="M0.3,3.6 L7,0.2 L16.5,1.1 L20.4,2.4 L20.4,3.8 L13.5,8 L10.5,8.2 L0.5,5.4Z" fill="#141414"/><path d="M0.9,3.6 L7.2,0.7 L16.3,1.5 L19.6,2.6 L13,6.4 L2,4.7Z" fill="#383838"/><ellipse cx="10.6" cy="2.9" rx="3.3" ry="1.5" fill="#5e5e5e"/></g><g transform="translate(4,273.04)"><rect x="0.6" y="0.6" width="12.6" height="12.3" fill="#fff" stroke="#5c5c5c" stroke-width="1.2"/><path d="M2.2,6.7 L5.3,9.3 L11.2,3.4" fill="none" stroke="#333" stroke-width="1.25"/></g><g transform="translate(19.8,279.94)"><path d="M0.3,3.6 L7,0.2 L16.5,1.1 L20.4,2.4 L20.4,3.8 L13.5,8 L10.5,8.2 L0.5,5.4Z" fill="#141414"/><path d="M0.9,3.6 L7.2,0.7 L16.3,1.5 L19.6,2.6 L13,6.4 L2,4.7Z" fill="#383838"/><ellipse cx="10.6" cy="2.9" rx="3.3" ry="1.5" fill="#5e5e5e"/></g><g transform="translate(4,295.07)"><rect x="0.6" y="0.6" width="12.6" height="12.3" fill="#fff" stroke="#5c5c5c" stroke-width="1.2"/><path d="M2.2,6.7 L5.3,9.3 L11.2,3.4" fill="none" stroke="#333" stroke-width="1.25"/></g><g transform="translate(19.8,301.97)"><path d="M0.3,3.6 L7,0.2 L16.5,1.1 L20.4,2.4 L20.4,3.8 L13.5,8 L10.5,8.2 L0.5,5.4Z" fill="#141414"/><path d="M0.9,3.6 L7.2,0.7 L16.3,1.5 L19.6,2.6 L13,6.4 L2,4.7Z" fill="#383838"/><ellipse cx="10.6" cy="2.9" rx="3.3" ry="1.5" fill="#5e5e5e"/></g><g transform="translate(4,317.10)"><rect x="0.6" y="0.6" width="12.6" height="12.3" fill="#fff" stroke="#5c5c5c" stroke-width="1.2"/><path d="M2.2,6.7 L5.3,9.3 L11.2,3.4" fill="none" stroke="#333" stroke-width="1.25"/></g><g transform="translate(19.8,324.00)"><path d="M0.3,3.6 L7,0.2 L16.5,1.1 L20.4,2.4 L20.4,3.8 L13.5,8 L10.5,8.2 L0.5,5.4Z" fill="#26328a"/><path d="M0.9,3.6 L7.2,0.7 L16.3,1.5 L19.6,2.6 L13,6.4 L2,4.7Z" fill="#4860d0"/><ellipse cx="10.6" cy="2.9" rx="3.3" ry="1.5" fill="#7f95f0"/></g><g transform="translate(4,339.13)"><rect x="0.6" y="0.6" width="12.6" height="12.3" fill="#fff" stroke="#5c5c5c" stroke-width="1.2"/><path d="M2.2,6.7 L5.3,9.3 L11.2,3.4" fill="none" stroke="#333" stroke-width="1.25"/></g><g transform="translate(19.8,346.03)"><path d="M0.3,3.6 L7,0.2 L16.5,1.1 L20.4,2.4 L20.4,3.8 L13.5,8 L10.5,8.2 L0.5,5.4Z" fill="#141414"/><path d="M0.9,3.6 L7.2,0.7 L16.3,1.5 L19.6,2.6 L13,6.4 L2,4.7Z" fill="#383838"/><ellipse cx="10.6" cy="2.9" rx="3.3" ry="1.5" fill="#5e5e5e"/></g><g transform="translate(4,361.16)"><rect x="0.6" y="0.6" width="12.6" height="12.3" fill="#fff" stroke="#5c5c5c" stroke-width="1.2"/><path d="M2.2,6.7 L5.3,9.3 L11.2,3.4" fill="none" stroke="#333" stroke-width="1.25"/></g><g transform="translate(19.8,368.06)"><path d="M0.3,3.6 L7,0.2 L16.5,1.1 L20.4,2.4 L20.4,3.8 L13.5,8 L10.5,8.2 L0.5,5.4Z" fill="#26328a"/><path d="M0.9,3.6 L7.2,0.7 L16.3,1.5 L19.6,2.6 L13,6.4 L2,4.7Z" fill="#4860d0"/><ellipse cx="10.6" cy="2.9" rx="3.3" ry="1.5" fill="#7f95f0"/></g><g transform="translate(4,383.19)"><rect x="0.6" y="0.6" width="12.6" height="12.3" fill="#fff" stroke="#5c5c5c" stroke-width="1.2"/><path d="M2.2,6.7 L5.3,9.3 L11.2,3.4" fill="none" stroke="#333" stroke-width="1.25"/></g><g transform="translate(19.8,390.09)"><path d="M0.3,3.6 L7,0.2 L16.5,1.1 L20.4,2.4 L20.4,3.8 L13.5,8 L10.5,8.2 L0.5,5.4Z" fill="#141414"/><path d="M0.9,3.6 L7.2,0.7 L16.3,1.5 L19.6,2.6 L13,6.4 L2,4.7Z" fill="#383838"/><ellipse cx="10.6" cy="2.9" rx="3.3" ry="1.5" fill="#5e5e5e"/></g><g transform="translate(4,405.22)"><rect x="0.6" y="0.6" width="12.6" height="12.3" fill="#fff" stroke="#5c5c5c" stroke-width="1.2"/><path d="M2.2,6.7 L5.3,9.3 L11.2,3.4" fill="none" stroke="#333" stroke-width="1.25"/></g><g transform="translate(19.8,412.12)"><path d="M0.3,3.6 L7,0.2 L16.5,1.1 L20.4,2.4 L20.4,3.8 L13.5,8 L10.5,8.2 L0.5,5.4Z" fill="#141414"/><path d="M0.9,3.6 L7.2,0.7 L16.3,1.5 L19.6,2.6 L13,6.4 L2,4.7Z" fill="#383838"/><ellipse cx="10.6" cy="2.9" rx="3.3" ry="1.5" fill="#5e5e5e"/></g><g transform="translate(4,427.25)"><rect x="0.6" y="0.6" width="12.6" height="12.3" fill="#fff" stroke="#5c5c5c" stroke-width="1.2"/><path d="M2.2,6.7 L5.3,9.3 L11.2,3.4" fill="none" stroke="#333" stroke-width="1.25"/></g><g transform="translate(19.8,434.15)"><path d="M0.3,3.6 L7,0.2 L16.5,1.1 L20.4,2.4 L20.4,3.8 L13.5,8 L10.5,8.2 L0.5,5.4Z" fill="#141414"/><path d="M0.9,3.6 L7.2,0.7 L16.3,1.5 L19.6,2.6 L13,6.4 L2,4.7Z" fill="#383838"/><ellipse cx="10.6" cy="2.9" rx="3.3" ry="1.5" fill="#5e5e5e"/></g><g transform="translate(4,449.28)"><rect x="0.6" y="0.6" width="12.6" height="12.3" fill="#fff" stroke="#5c5c5c" stroke-width="1.2"/><path d="M2.2,6.7 L5.3,9.3 L11.2,3.4" fill="none" stroke="#333" stroke-width="1.25"/></g><g transform="translate(19.8,456.18)"><path d="M0.3,3.6 L7,0.2 L16.5,1.1 L20.4,2.4 L20.4,3.8 L13.5,8 L10.5,8.2 L0.5,5.4Z" fill="#141414"/><path d="M0.9,3.6 L7.2,0.7 L16.3,1.5 L19.6,2.6 L13,6.4 L2,4.7Z" fill="#383838"/><ellipse cx="10.6" cy="2.9" rx="3.3" ry="1.5" fill="#5e5e5e"/></g><g transform="translate(4,471.31)"><rect x="0.6" y="0.6" width="12.6" height="12.3" fill="#fff" stroke="#5c5c5c" stroke-width="1.2"/><path d="M2.2,6.7 L5.3,9.3 L11.2,3.4" fill="none" stroke="#333" stroke-width="1.25"/></g><g transform="translate(19.8,478.21)"><path d="M0.3,3.6 L7,0.2 L16.5,1.1 L20.4,2.4 L20.4,3.8 L13.5,8 L10.5,8.2 L0.5,5.4Z" fill="#141414"/><path d="M0.9,3.6 L7.2,0.7 L16.3,1.5 L19.6,2.6 L13,6.4 L2,4.7Z" fill="#383838"/><ellipse cx="10.6" cy="2.9" rx="3.3" ry="1.5" fill="#5e5e5e"/></g><g transform="translate(4,493.34)"><rect x="0.6" y="0.6" width="12.6" height="12.3" fill="#fff" stroke="#5c5c5c" stroke-width="1.2"/><path d="M2.2,6.7 L5.3,9.3 L11.2,3.4" fill="none" stroke="#333" stroke-width="1.25"/></g><g transform="translate(19.8,500.24)"><path d="M0.3,3.6 L7,0.2 L16.5,1.1 L20.4,2.4 L20.4,3.8 L13.5,8 L10.5,8.2 L0.5,5.4Z" fill="#141414"/><path d="M0.9,3.6 L7.2,0.7 L16.3,1.5 L19.6,2.6 L13,6.4 L2,4.7Z" fill="#383838"/><ellipse cx="10.6" cy="2.9" rx="3.3" ry="1.5" fill="#5e5e5e"/></g><g transform="translate(4,515.37)"><rect x="0.6" y="0.6" width="12.6" height="12.3" fill="#fff" stroke="#5c5c5c" stroke-width="1.2"/><path d="M2.2,6.7 L5.3,9.3 L11.2,3.4" fill="none" stroke="#333" stroke-width="1.25"/></g><g transform="translate(19.8,522.27)"><path d="M0.3,3.6 L7,0.2 L16.5,1.1 L20.4,2.4 L20.4,3.8 L13.5,8 L10.5,8.2 L0.5,5.4Z" fill="#141414"/><path d="M0.9,3.6 L7.2,0.7 L16.3,1.5 L19.6,2.6 L13,6.4 L2,4.7Z" fill="#383838"/><ellipse cx="10.6" cy="2.9" rx="3.3" ry="1.5" fill="#5e5e5e"/></g><g transform="translate(4,537.40)"><rect x="0.6" y="0.6" width="12.6" height="12.3" fill="#fff" stroke="#5c5c5c" stroke-width="1.2"/><path d="M2.2,6.7 L5.3,9.3 L11.2,3.4" fill="none" stroke="#333" stroke-width="1.25"/></g><g transform="translate(19.8,544.30)"><path d="M0.3,3.6 L7,0.2 L16.5,1.1 L20.4,2.4 L20.4,3.8 L13.5,8 L10.5,8.2 L0.5,5.4Z" fill="#26328a"/><path d="M0.9,3.6 L7.2,0.7 L16.3,1.5 L19.6,2.6 L13,6.4 L2,4.7Z" fill="#4860d0"/><ellipse cx="10.6" cy="2.9" rx="3.3" ry="1.5" fill="#7f95f0"/></g><g transform="translate(4,559.43)"><rect x="0.6" y="0.6" width="12.6" height="12.3" fill="#fff" stroke="#5c5c5c" stroke-width="1.2"/><path d="M2.2,6.7 L5.3,9.3 L11.2,3.4" fill="none" stroke="#333" stroke-width="1.25"/></g><g transform="translate(19.8,566.33)"><path d="M0.3,3.6 L7,0.2 L16.5,1.1 L20.4,2.4 L20.4,3.8 L13.5,8 L10.5,8.2 L0.5,5.4Z" fill="#26328a"/><path d="M0.9,3.6 L7.2,0.7 L16.3,1.5 L19.6,2.6 L13,6.4 L2,4.7Z" fill="#4860d0"/><ellipse cx="10.6" cy="2.9" rx="3.3" ry="1.5" fill="#7f95f0"/></g><g transform="translate(4,581.46)"><rect x="0.6" y="0.6" width="12.6" height="12.3" fill="#fff" stroke="#5c5c5c" stroke-width="1.2"/><path d="M2.2,6.7 L5.3,9.3 L11.2,3.4" fill="none" stroke="#333" stroke-width="1.25"/></g><g transform="translate(19.8,588.36)"><path d="M0.3,3.6 L7,0.2 L16.5,1.1 L20.4,2.4 L20.4,3.8 L13.5,8 L10.5,8.2 L0.5,5.4Z" fill="#141414"/><path d="M0.9,3.6 L7.2,0.7 L16.3,1.5 L19.6,2.6 L13,6.4 L2,4.7Z" fill="#383838"/><ellipse cx="10.6" cy="2.9" rx="3.3" ry="1.5" fill="#5e5e5e"/></g><g transform="translate(4,603.49)"><rect x="0.6" y="0.6" width="12.6" height="12.3" fill="#fff" stroke="#5c5c5c" stroke-width="1.2"/><path d="M2.2,6.7 L5.3,9.3 L11.2,3.4" fill="none" stroke="#333" stroke-width="1.25"/></g><g transform="translate(19.8,610.39)"><path d="M0.3,3.6 L7,0.2 L16.5,1.1 L20.4,2.4 L20.4,3.8 L13.5,8 L10.5,8.2 L0.5,5.4Z" fill="#141414"/><path d="M0.9,3.6 L7.2,0.7 L16.3,1.5 L19.6,2.6 L13,6.4 L2,4.7Z" fill="#383838"/><ellipse cx="10.6" cy="2.9" rx="3.3" ry="1.5" fill="#5e5e5e"/></g><g transform="translate(4,625.52)"><rect x="0.6" y="0.6" width="12.6" height="12.3" fill="#fff" stroke="#5c5c5c" stroke-width="1.2"/><path d="M2.2,6.7 L5.3,9.3 L11.2,3.4" fill="none" stroke="#333" stroke-width="1.25"/></g><g transform="translate(19.8,632.42)"><path d="M0.3,3.6 L7,0.2 L16.5,1.1 L20.4,2.4 L20.4,3.8 L13.5,8 L10.5,8.2 L0.5,5.4Z" fill="#141414"/><path d="M0.9,3.6 L7.2,0.7 L16.3,1.5 L19.6,2.6 L13,6.4 L2,4.7Z" fill="#383838"/><ellipse cx="10.6" cy="2.9" rx="3.3" ry="1.5" fill="#5e5e5e"/></g><g transform="translate(4,647.55)"><rect x="0.6" y="0.6" width="12.6" height="12.3" fill="#fff" stroke="#5c5c5c" stroke-width="1.2"/><path d="M2.2,6.7 L5.3,9.3 L11.2,3.4" fill="none" stroke="#333" stroke-width="1.25"/></g><g transform="translate(19.8,654.45)"><path d="M0.3,3.6 L7,0.2 L16.5,1.1 L20.4,2.4 L20.4,3.8 L13.5,8 L10.5,8.2 L0.5,5.4Z" fill="#141414"/><path d="M0.9,3.6 L7.2,0.7 L16.3,1.5 L19.6,2.6 L13,6.4 L2,4.7Z" fill="#383838"/><ellipse cx="10.6" cy="2.9" rx="3.3" ry="1.5" fill="#5e5e5e"/></g><g transform="translate(4,669.58)"><rect x="0.6" y="0.6" width="12.6" height="12.3" fill="#fff" stroke="#5c5c5c" stroke-width="1.2"/><path d="M2.2,6.7 L5.3,9.3 L11.2,3.4" fill="none" stroke="#333" stroke-width="1.25"/></g><g transform="translate(19.8,676.48)"><path d="M0.3,3.6 L7,0.2 L16.5,1.1 L20.4,2.4 L20.4,3.8 L13.5,8 L10.5,8.2 L0.5,5.4Z" fill="#141414"/><path d="M0.9,3.6 L7.2,0.7 L16.3,1.5 L19.6,2.6 L13,6.4 L2,4.7Z" fill="#383838"/><ellipse cx="10.6" cy="2.9" rx="3.3" ry="1.5" fill="#5e5e5e"/></g><g transform="translate(4,691.61)"><rect x="0.6" y="0.6" width="12.6" height="12.3" fill="#fff" stroke="#5c5c5c" stroke-width="1.2"/><path d="M2.2,6.7 L5.3,9.3 L11.2,3.4" fill="none" stroke="#333" stroke-width="1.25"/></g><g transform="translate(19.8,698.51)"><path d="M0.3,3.6 L7,0.2 L16.5,1.1 L20.4,2.4 L20.4,3.8 L13.5,8 L10.5,8.2 L0.5,5.4Z" fill="#26328a"/><path d="M0.9,3.6 L7.2,0.7 L16.3,1.5 L19.6,2.6 L13,6.4 L2,4.7Z" fill="#4860d0"/><ellipse cx="10.6" cy="2.9" rx="3.3" ry="1.5" fill="#7f95f0"/></g><g transform="translate(4,713.64)"><rect x="0.6" y="0.6" width="12.6" height="12.3" fill="#fff" stroke="#5c5c5c" stroke-width="1.2"/><path d="M2.2,6.7 L5.3,9.3 L11.2,3.4" fill="none" stroke="#333" stroke-width="1.25"/></g><g transform="translate(19.8,720.54)"><path d="M0.3,3.6 L7,0.2 L16.5,1.1 L20.4,2.4 L20.4,3.8 L13.5,8 L10.5,8.2 L0.5,5.4Z" fill="#141414"/><path d="M0.9,3.6 L7.2,0.7 L16.3,1.5 L19.6,2.6 L13,6.4 L2,4.7Z" fill="#383838"/><ellipse cx="10.6" cy="2.9" rx="3.3" ry="1.5" fill="#5e5e5e"/></g></svg></div>
<!-- scrollbar -->
<div class="abs" style="left:290px;top:72px;width:18px;height:645px;background:#f0f0f0"></div>
<div class="abs" style="left:290px;top:89px;width:17px;height:356px;background:#cdcdcd"></div>
<svg class="abs" style="left:292px;top:76px" width="14" height="10"><path d="M3 7L7 3L11 7" stroke="#555" stroke-width="1.6" fill="none"/></svg>
<svg class="abs" style="left:292px;top:703px" width="14" height="10"><path d="M3 3L7 7L11 3" stroke="#555" stroke-width="1.6" fill="none"/></svg>
<div class="abs" style="left:310.3px;top:71px;width:2.6px;height:646px;background:#7c7c7c"></div>

<!-- canvas -->
<div class="abs" style="left:312px;top:72px;width:1231px;height:644px;background:#fff;border-top:1px solid #888"></div>
<div class="abs" style="left:1542px;top:72px;width:1px;height:644px;background:#d8d8d8"></div>
<div class="abs" style="left:1543px;top:72px;width:3px;height:660px;background:#f0f0f0"></div>
<svg id="cv" class="abs" style="left:0;top:0" width="1547" height="732" font-family="Liberation Sans"><defs><clipPath id="cc"><rect x="312" y="73" width="1230" height="643"/></clipPath></defs><g clip-path="url(#cc)"><line x1="415.9" y1="83" x2="415.9" y2="716" stroke="#e2e2e2" stroke-width="1" stroke-dasharray="3.5,3.7"/>
<line x1="415.9" y1="79.3" x2="415.9" y2="81.5" stroke="#555" stroke-width="0.9"/>
<text x="415.9" y="78" font-size="5.5" fill="#667" text-anchor="middle">1</text>
<line x1="491.4" y1="83" x2="491.4" y2="716" stroke="#e2e2e2" stroke-width="1" stroke-dasharray="3.5,3.7"/>
<line x1="491.4" y1="79.3" x2="491.4" y2="81.5" stroke="#555" stroke-width="0.9"/>
<text x="491.4" y="78" font-size="5.5" fill="#667" text-anchor="middle">2</text>
<line x1="567.0" y1="83" x2="567.0" y2="716" stroke="#e2e2e2" stroke-width="1" stroke-dasharray="3.5,3.7"/>
<line x1="567.0" y1="79.3" x2="567.0" y2="81.5" stroke="#555" stroke-width="0.9"/>
<text x="567.0" y="78" font-size="5.5" fill="#667" text-anchor="middle">3</text>
<line x1="642.5" y1="83" x2="642.5" y2="716" stroke="#e2e2e2" stroke-width="1" stroke-dasharray="3.5,3.7"/>
<line x1="642.5" y1="79.3" x2="642.5" y2="81.5" stroke="#555" stroke-width="0.9"/>
<text x="642.5" y="78" font-size="5.5" fill="#667" text-anchor="middle">4</text>
<line x1="718.0" y1="83" x2="718.0" y2="716" stroke="#e2e2e2" stroke-width="1" stroke-dasharray="3.5,3.7"/>
<line x1="718.0" y1="79.3" x2="718.0" y2="81.5" stroke="#555" stroke-width="0.9"/>
<text x="718.0" y="78" font-size="5.5" fill="#667" text-anchor="middle">5</text>
<line x1="793.6" y1="83" x2="793.6" y2="716" stroke="#e2e2e2" stroke-width="1" stroke-dasharray="3.5,3.7"/>
<line x1="793.6" y1="79.3" x2="793.6" y2="81.5" stroke="#555" stroke-width="0.9"/>
<text x="793.6" y="78" font-size="5.5" fill="#667" text-anchor="middle">6</text>
<line x1="869.2" y1="83" x2="869.2" y2="716" stroke="#e2e2e2" stroke-width="1" stroke-dasharray="3.5,3.7"/>
<line x1="869.2" y1="79.3" x2="869.2" y2="81.5" stroke="#555" stroke-width="0.9"/>
<text x="869.2" y="78" font-size="5.5" fill="#667" text-anchor="middle">7</text>
<line x1="944.7" y1="83" x2="944.7" y2="716" stroke="#e2e2e2" stroke-width="1" stroke-dasharray="3.5,3.7"/>
<line x1="944.7" y1="79.3" x2="944.7" y2="81.5" stroke="#555" stroke-width="0.9"/>
<text x="944.7" y="78" font-size="5.5" fill="#667" text-anchor="middle">8</text>
<line x1="1020.2" y1="83" x2="1020.2" y2="716" stroke="#e2e2e2" stroke-width="1" stroke-dasharray="3.5,3.7"/>
<line x1="1020.2" y1="79.3" x2="1020.2" y2="81.5" stroke="#555" stroke-width="0.9"/>
<text x="1020.2" y="78" font-size="5.5" fill="#667" text-anchor="middle">9</text>
<line x1="1095.8" y1="83" x2="1095.8" y2="716" stroke="#e2e2e2" stroke-width="1" stroke-dasharray="3.5,3.7"/>
<line x1="1095.8" y1="79.3" x2="1095.8" y2="81.5" stroke="#555" stroke-width="0.9"/>
<text x="1095.8" y="78" font-size="5.5" fill="#667" text-anchor="middle">10</text>
<line x1="1171.3" y1="83" x2="1171.3" y2="716" stroke="#e2e2e2" stroke-width="1" stroke-dasharray="3.5,3.7"/>
<line x1="1171.3" y1="79.3" x2="1171.3" y2="81.5" stroke="#555" stroke-width="0.9"/>
<text x="1171.3" y="78" font-size="5.5" fill="#667" text-anchor="middle">11</text>
<line x1="1246.9" y1="83" x2="1246.9" y2="716" stroke="#e2e2e2" stroke-width="1" stroke-dasharray="3.5,3.7"/>
<line x1="1246.9" y1="79.3" x2="1246.9" y2="81.5" stroke="#555" stroke-width="0.9"/>
<text x="1246.9" y="78" font-size="5.5" fill="#667" text-anchor="middle">12</text>
<line x1="1322.5" y1="83" x2="1322.5" y2="716" stroke="#e2e2e2" stroke-width="1" stroke-dasharray="3.5,3.7"/>
<line x1="1322.5" y1="79.3" x2="1322.5" y2="81.5" stroke="#555" stroke-width="0.9"/>
<text x="1322.5" y="78" font-size="5.5" fill="#667" text-anchor="middle">13</text>
<line x1="1398.0" y1="83" x2="1398.0" y2="716" stroke="#e2e2e2" stroke-width="1" stroke-dasharray="3.5,3.7"/>
<line x1="1398.0" y1="79.3" x2="1398.0" y2="81.5" stroke="#555" stroke-width="0.9"/>
<text x="1398.0" y="78" font-size="5.5" fill="#667" text-anchor="middle">14</text>
<line x1="1473.5" y1="83" x2="1473.5" y2="716" stroke="#e2e2e2" stroke-width="1" stroke-dasharray="3.5,3.7"/>
<line x1="1473.5" y1="79.3" x2="1473.5" y2="81.5" stroke="#555" stroke-width="0.9"/>
<text x="1473.5" y="78" font-size="5.5" fill="#667" text-anchor="middle">15</text>
<text x="340.3" y="78" font-size="5.5" fill="#667" text-anchor="middle">0</text>
<line x1="340.3" y1="79.3" x2="340.3" y2="81.5" stroke="#555" stroke-width="0.9"/>
<line x1="327" y1="127.5" x2="1541" y2="127.5" stroke="#e2e2e2" stroke-width="1" stroke-dasharray="3.5,3.7"/>
<line x1="323.5" y1="127.5" x2="325.8" y2="127.5" stroke="#555" stroke-width="0.9"/>
<text x="320" y="129.6" font-size="5.5" fill="#667" text-anchor="middle">1</text>
<line x1="323.5" y1="203.1" x2="325.8" y2="203.1" stroke="#555" stroke-width="0.9"/>
<text x="320" y="205.1" font-size="5.5" fill="#667" text-anchor="middle">0</text>
<line x1="327" y1="278.6" x2="1541" y2="278.6" stroke="#e2e2e2" stroke-width="1" stroke-dasharray="3.5,3.7"/>
<line x1="323.5" y1="278.6" x2="325.8" y2="278.6" stroke="#555" stroke-width="0.9"/>
<text x="320" y="280.6" font-size="5.5" fill="#667" text-anchor="middle">1</text>
<line x1="327" y1="354.2" x2="1541" y2="354.2" stroke="#e2e2e2" stroke-width="1" stroke-dasharray="3.5,3.7"/>
<line x1="323.5" y1="354.2" x2="325.8" y2="354.2" stroke="#555" stroke-width="0.9"/>
<text x="320" y="356.2" font-size="5.5" fill="#667" text-anchor="middle">2</text>
<line x1="327" y1="429.8" x2="1541" y2="429.8" stroke="#e2e2e2" stroke-width="1" stroke-dasharray="3.5,3.7"/>
<line x1="323.5" y1="429.8" x2="325.8" y2="429.8" stroke="#555" stroke-width="0.9"/>
<text x="320" y="431.8" font-size="5.5" fill="#667" text-anchor="middle">3</text>
<line x1="327" y1="505.3" x2="1541" y2="505.3" stroke="#e2e2e2" stroke-width="1" stroke-dasharray="3.5,3.7"/>
<line x1="323.5" y1="505.3" x2="325.8" y2="505.3" stroke="#555" stroke-width="0.9"/>
<text x="320" y="507.3" font-size="5.5" fill="#667" text-anchor="middle">4</text>
<line x1="327" y1="580.9" x2="1541" y2="580.9" stroke="#e2e2e2" stroke-width="1" stroke-dasharray="3.5,3.7"/>
<line x1="323.5" y1="580.9" x2="325.8" y2="580.9" stroke="#555" stroke-width="0.9"/>
<text x="320" y="582.9" font-size="5.5" fill="#667" text-anchor="middle">5</text>
<line x1="327" y1="656.4" x2="1541" y2="656.4" stroke="#e2e2e2" stroke-width="1" stroke-dasharray="3.5,3.7"/>
<line x1="323.5" y1="656.4" x2="325.8" y2="656.4" stroke="#555" stroke-width="0.9"/>
<text x="320" y="658.4" font-size="5.5" fill="#667" text-anchor="middle">6</text>
<line x1="327" y1="203.4" x2="1541" y2="203.4" stroke="#c46462" stroke-width="1"/>
<line x1="340.5" y1="83" x2="340.5" y2="716" stroke="#c05c5a" stroke-width="1.05"/>
<rect x="341.5" y="203.7" width="853.8" height="338.6" fill="rgb(48,147,217)" fill-opacity="0.6" stroke="#3b7db0" stroke-width="1.2"/>
<line x1="341.5" y1="203.2" x2="341.5" y2="542.8" stroke="#225f90" stroke-width="2.5"/>
<line x1="1195.3" y1="203.2" x2="1195.3" y2="542.8" stroke="#3b7db0" stroke-width="1"/>
<line x1="342" y1="206.6" x2="1200.5" y2="206.6" stroke="#3a6f9a" stroke-width="1"/>
<line x1="342" y1="540.1" x2="1200.5" y2="540.1" stroke="#3f7fab" stroke-width="1"/>
<path d="M1200.5,206.3 H1350.6 V540.3 H1200.5" fill="none" stroke="#666" stroke-width="1"/>
<line x1="1200.8" y1="206" x2="1200.8" y2="540.5" stroke="#555" stroke-width="1.2"/>
<rect x="396.7" y="206.6" width="126.7" height="10.1" fill="none" stroke="#1f5583" stroke-width="1.1"/>
<line x1="388.6" y1="231.2" x2="531.3" y2="231.2" stroke="#1f5583" stroke-width="1.3" />
<circle cx="397" cy="231.2" r="2.6" fill="#1a4a75"/>
<circle cx="523.4" cy="231.2" r="2.6" fill="#1a4a75"/>
<line x1="397" y1="225" x2="397" y2="238" stroke="#1f5583" stroke-width="0.8" />
<line x1="523.4" y1="225" x2="523.4" y2="238" stroke="#1f5583" stroke-width="0.8" />
<text x="0" y="0" font-size="9.6" fill="#4a6a8c" text-anchor="middle" transform="translate(460,225.5) scale(0.88,1)">1,680</text>
<path d="M534,215.9 A61,61 0 0,0 595,277" fill="none" stroke="#1f5583" stroke-width="1.1"/>
<rect x="534" y="214.6" width="60.4" height="2.7" fill="none" stroke="#1f5583" stroke-width="0.9"/>
<rect x="594" y="212.4" width="11.8" height="4.3" fill="none" stroke="#1f5583" stroke-width="1.0"/>
<rect x="594" y="279.4" width="11.8" height="4.3" fill="none" stroke="#1f5583" stroke-width="1.0"/>
<line x1="600.2" y1="206.6" x2="600.2" y2="540.1" stroke="#1f5583" stroke-width="1.2" />
<rect x="412.2" y="264.8" width="90.4" height="220.9" fill="none" stroke="#1f5583" stroke-width="1.1"/>
<line x1="412.2" y1="375.1" x2="502.6" y2="375.1" stroke="#1f5583" stroke-width="1.1" />
<line x1="452.4" y1="257.2" x2="452.4" y2="490" stroke="#1f5583" stroke-width="1.0" />
<line x1="457.3" y1="264.8" x2="457.3" y2="485.7" stroke="#1f5583" stroke-width="1.0" />
<circle cx="452.4" cy="264.8" r="2.6" fill="#1a4a75"/>
<circle cx="452.4" cy="375.1" r="2.6" fill="#1a4a75"/>
<circle cx="453" cy="485.7" r="2.6" fill="#1a4a75"/>
<line x1="404.6" y1="479.7" x2="508.4" y2="479.7" stroke="#1f5583" stroke-width="1.1" />
<circle cx="457.3" cy="479.7" r="2.6" fill="#1a4a75"/>
<circle cx="502.4" cy="479.7" r="2.6" fill="#1a4a75"/>
<text x="0" y="0" font-size="9.6" fill="#4a6a8c" text-anchor="middle" transform="translate(448.5,320.5) rotate(-90) scale(0.88,1)">1,400</text>
<text x="0" y="0" font-size="9.6" fill="#4a6a8c" text-anchor="middle" transform="translate(449.6,431) rotate(-90) scale(0.88,1)">1,400</text>
<text x="0" y="0" font-size="9.6" fill="#4a6a8c" text-anchor="middle" transform="translate(479.7,475) scale(0.88,1)">600</text>
<line x1="430.5" y1="485.7" x2="430.5" y2="540.1" stroke="#1f5583" stroke-width="1.2" />
<line x1="429.61" y1="533.78" x2="479.31" y2="485.28" stroke="#1a4a75" stroke-width="0.9" />
<line x1="430.4" y1="534.59" x2="480.1" y2="486.09" stroke="#1a4a75" stroke-width="0.9" />
<line x1="431.2" y1="535.41" x2="480.9" y2="486.91" stroke="#1a4a75" stroke-width="0.9" />
<line x1="431.99" y1="536.22" x2="481.69" y2="487.72" stroke="#1a4a75" stroke-width="0.9" />
<circle cx="463.2" cy="502.2" r="6.6" fill="none" stroke="#1f5583" stroke-width="1"/>
<circle cx="453.9" cy="517.7" r="4.4" fill="none" stroke="#1f5583" stroke-width="1"/>
<rect x="767.8" y="279.7" width="87.4" height="32.7" fill="none" stroke="#1f5583" stroke-width="1.6"/>
<line x1="761.3" y1="312.4" x2="865" y2="312.4" stroke="#1f5583" stroke-width="2.6" />
<circle cx="768" cy="312.4" r="2.8" fill="#1a4a75"/>
<circle cx="808.6" cy="312.4" r="2.8" fill="#1a4a75"/>
<circle cx="855" cy="312.4" r="3" fill="#1a4a75"/>
<line x1="855" y1="271" x2="855" y2="430" stroke="#1f5583" stroke-width="1.6" />
<circle cx="855" cy="279.7" r="2.6" fill="#1a4a75"/>
<line x1="859.2" y1="279.7" x2="859.2" y2="430" stroke="#1f5583" stroke-width="1.4" />
<line x1="767.4" y1="312.4" x2="767.4" y2="424" stroke="#1f5583" stroke-width="1.8" />
<line x1="809.4" y1="312.4" x2="809.4" y2="430" stroke="#1f5583" stroke-width="1.6" />
<line x1="812.8" y1="312.4" x2="812.8" y2="430" stroke="#1f5583" stroke-width="2.5" />
<text x="0" y="0" font-size="9.6" fill="#4a6a8c" text-anchor="middle" transform="translate(852.6,296) rotate(-90) scale(0.88,1)">420</text>
<text x="0" y="0" font-size="9.6" fill="#4a6a8c" text-anchor="middle" transform="translate(812.6,305) scale(0.88,1)">1,190</text>
<text x="0" y="0" font-size="9.6" fill="#4a6a8c" text-anchor="middle" transform="translate(804.6,369) rotate(-90) scale(0.88,1)">1,400</text>
<text x="0" y="0" font-size="9.6" fill="#4a6a8c" text-anchor="middle" transform="translate(852,369) rotate(-90) scale(0.88,1)">1,400</text>
<text x="0" y="0" font-size="9.6" fill="#4a6a8c" text-anchor="middle" transform="translate(789.7,418) scale(0.88,1)">600</text>
<text x="0" y="0" font-size="9.6" fill="#4a6a8c" text-anchor="middle" transform="translate(835,418) scale(0.88,1)">600</text>
<line x1="760" y1="424.3" x2="866.7" y2="424.3" stroke="#1f5583" stroke-width="2.6" />
<circle cx="767" cy="423.2" r="2.8" fill="#1a4a75"/>
<circle cx="812.1" cy="423.2" r="2.8" fill="#1a4a75"/>
<rect x="761" y="426.6" width="105" height="62.9" fill="none" stroke="#1f5583" stroke-width="1.7"/>
<line x1="862.6" y1="426.6" x2="862.6" y2="497" stroke="#1f5583" stroke-width="1.5" />
<line x1="866" y1="424" x2="866" y2="497" stroke="#1f5583" stroke-width="1.6" />
<line x1="753" y1="486" x2="874.3" y2="486" stroke="#1f5583" stroke-width="1.8" />
<circle cx="761" cy="486" r="2.8" fill="#1a4a75"/>
<circle cx="865" cy="486" r="3.2" fill="#1a4a75"/>
<line x1="761" y1="480" x2="761" y2="497" stroke="#1f5583" stroke-width="0.8" />
<text x="0" y="0" font-size="9.6" fill="#4a6a8c" text-anchor="middle" transform="translate(813.6,480) scale(0.88,1)">1,400</text>
<rect x="965.8" y="279.7" width="87.4" height="32.7" fill="none" stroke="#1f5583" stroke-width="1.6"/>
<line x1="959.3" y1="312.4" x2="1063" y2="312.4" stroke="#1f5583" stroke-width="2.6" />
<circle cx="966" cy="312.4" r="2.8" fill="#1a4a75"/>
<circle cx="1006.6" cy="312.4" r="2.8" fill="#1a4a75"/>
<circle cx="1053" cy="312.4" r="3" fill="#1a4a75"/>
<line x1="1053" y1="271" x2="1053" y2="430" stroke="#1f5583" stroke-width="1.6" />
<circle cx="1053" cy="279.7" r="2.6" fill="#1a4a75"/>
<line x1="1057.2" y1="279.7" x2="1057.2" y2="430" stroke="#1f5583" stroke-width="1.4" />
<line x1="965.4" y1="312.4" x2="965.4" y2="424" stroke="#1f5583" stroke-width="1.8" />
<line x1="1007.4" y1="312.4" x2="1007.4" y2="430" stroke="#1f5583" stroke-width="1.6" />
<line x1="1010.8" y1="312.4" x2="1010.8" y2="430" stroke="#1f5583" stroke-width="2.5" />
<text x="0" y="0" font-size="9.6" fill="#4a6a8c" text-anchor="middle" transform="translate(1050.6,296) rotate(-90) scale(0.88,1)">420</text>
<text x="0" y="0" font-size="9.6" fill="#4a6a8c" text-anchor="middle" transform="translate(1010.6,305) scale(0.88,1)">1,190</text>
<text x="0" y="0" font-size="9.6" fill="#4a6a8c" text-anchor="middle" transform="translate(1002.6,369) rotate(-90) scale(0.88,1)">1,400</text>
<text x="0" y="0" font-size="9.6" fill="#4a6a8c" text-anchor="middle" transform="translate(1050,369) rotate(-90) scale(0.88,1)">1,400</text>
<text x="0" y="0" font-size="9.6" fill="#4a6a8c" text-anchor="middle" transform="translate(987.7,418) scale(0.88,1)">600</text>
<text x="0" y="0" font-size="9.6" fill="#4a6a8c" text-anchor="middle" transform="translate(1033,418) scale(0.88,1)">600</text>
<line x1="958" y1="424.3" x2="1064.7" y2="424.3" stroke="#1f5583" stroke-width="2.6" />
<circle cx="965" cy="423.2" r="2.8" fill="#1a4a75"/>
<circle cx="1010.1" cy="423.2" r="2.8" fill="#1a4a75"/>
<rect x="959" y="426.6" width="105" height="62.9" fill="none" stroke="#1f5583" stroke-width="1.7"/>
<line x1="1060.6" y1="426.6" x2="1060.6" y2="497" stroke="#1f5583" stroke-width="1.5" />
<line x1="1064" y1="424" x2="1064" y2="497" stroke="#1f5583" stroke-width="1.6" />
<line x1="951" y1="486" x2="1072.3" y2="486" stroke="#1f5583" stroke-width="1.8" />
<circle cx="959" cy="486" r="2.8" fill="#1a4a75"/>
<circle cx="1063" cy="486" r="3.2" fill="#1a4a75"/>
<line x1="959" y1="480" x2="959" y2="497" stroke="#1f5583" stroke-width="0.8" />
<text x="0" y="0" font-size="9.6" fill="#4a6a8c" text-anchor="middle" transform="translate(1011.6,480) scale(0.88,1)">1,400</text>
<line x1="1061.6" y1="422" x2="1061.6" y2="540.1" stroke="#1f5583" stroke-width="1.1" />
<line x1="1065" y1="422" x2="1065" y2="493" stroke="#1f5583" stroke-width="1.1" />
<circle cx="1061.6" cy="426" r="3" fill="#1a4a75"/>
<circle cx="1061.6" cy="490" r="3" fill="#1a4a75"/>
<text x="0" y="0" font-size="8.64" fill="#4a6a8c" text-anchor="middle" transform="translate(1055,458) rotate(-90) scale(0.88,1)">800</text>
<text x="0" y="0" font-size="8.64" fill="#4a6a8c" text-anchor="middle" transform="translate(1058,516) rotate(-90) scale(0.88,1)">600</text>
<rect x="1152" y="358" width="48.8" height="63.2" fill="none" stroke="#1f5583" stroke-width="1.2"/>
<rect x="1152" y="421.2" width="48.8" height="46.5" fill="none" stroke="#1f5583" stroke-width="1.2"/>
<line x1="1152" y1="467.7" x2="1152" y2="540.1" stroke="#1f5583" stroke-width="1.2" />
<rect x="1075.5" y="493.3" width="76.5" height="46.8" fill="none" stroke="#1f5583" stroke-width="1.2"/>
<line x1="1151.49" y1="524.31" x2="1198.99" y2="475.81" stroke="#1a4a75" stroke-width="0.9" />
<line x1="1152.29" y1="525.1" x2="1199.79" y2="476.6" stroke="#1a4a75" stroke-width="0.9" />
<line x1="1153.11" y1="525.9" x2="1200.61" y2="477.4" stroke="#1a4a75" stroke-width="0.9" />
<line x1="1153.91" y1="526.69" x2="1201.41" y2="478.19" stroke="#1a4a75" stroke-width="0.9" />
<circle cx="1182.5" cy="494.5" r="6.6" fill="none" stroke="#1f5583" stroke-width="1"/>
<circle cx="1174" cy="509.8" r="4.4" fill="none" stroke="#1f5583" stroke-width="1"/>
<line x1="1214.3" y1="352" x2="1214.3" y2="540.1" stroke="#333" stroke-width="1.0" />
<circle cx="1214.3" cy="357.5" r="3" fill="#111"/>
<line x1="1206" y1="357.5" x2="1222" y2="357.5" stroke="#222" stroke-width="1.0" />
<circle cx="1214.3" cy="421.2" r="3" fill="#111"/>
<line x1="1206" y1="421.2" x2="1222" y2="421.2" stroke="#222" stroke-width="1.0" />
<circle cx="1214.3" cy="467.7" r="3" fill="#111"/>
<line x1="1206" y1="467.7" x2="1222" y2="467.7" stroke="#222" stroke-width="1.0" />
<circle cx="1214.3" cy="540.1" r="2" fill="#111"/>
<text x="0" y="0" font-size="8.64" fill="#444" text-anchor="middle" transform="translate(1211.5,390) rotate(-90) scale(0.88,1)">800</text>
<text x="0" y="0" font-size="8.64" fill="#444" text-anchor="middle" transform="translate(1211.5,444) rotate(-90) scale(0.88,1)">590</text>
<text x="0" y="0" font-size="8.64" fill="#444" text-anchor="middle" transform="translate(1211.5,504) rotate(-90) scale(0.88,1)">920</text>
<path d="M1270,214 A62,65 0 0,1 1208,279" fill="none" stroke="#222" stroke-width="1.1"/>
<path d="M1208,283.5 A62,65 0 0,1 1270,348.5" fill="none" stroke="#222" stroke-width="1.1"/>
<rect x="1208" y="212" width="62" height="3" fill="none" stroke="#333" stroke-width="0.9"/>
<rect x="1208" y="347" width="62" height="3" fill="none" stroke="#333" stroke-width="0.9"/>
<rect x="1198.5" y="210" width="9.5" height="6" fill="none" stroke="#333" stroke-width="0.9"/>
<rect x="1198.5" y="277.5" width="9.5" height="7" fill="none" stroke="#333" stroke-width="0.9"/>
<rect x="1198.5" y="346" width="9.5" height="6" fill="none" stroke="#333" stroke-width="0.9"/><text x="359" y="206.5" font-size="7" fill="#1e1e1e" stroke="#1e1e1e" stroke-width="0.15" text-anchor="middle">096181_201</text>
<g transform="translate(359,215.5) scale(1.0)">
<path d="M-2.2,-2 A2.9,2.9 0 0,0 -2.2,2 M2.2,-2 A2.9,2.9 0 0,1 2.2,2" stroke="#2f6ca5" stroke-width="0.95" fill="none"/>
<path d="M-4.2,-3.6 A5.4,5.4 0 0,0 -4.2,3.6 M4.2,-3.6 A5.4,5.4 0 0,1 4.2,3.6" stroke="#2f6ca5" stroke-width="0.95" fill="none"/>
<path d="M-6.2,-5 A7.8,7.8 0 0,0 -6.2,5 M6.2,-5 A7.8,7.8 0 0,1 6.2,5" stroke="#2f6ca5" stroke-width="0.95" fill="none"/>
<circle cx="0" cy="0" r="0.8" fill="#2f6ca5"/>
<path d="M-0.8,3 L0.8,3 L3.3,11 L-3.3,11Z" fill="#2f6ca5"/>
<circle cx="0" cy="3" r="1" fill="#e02020"/>
</g>
<text x="1190.5" y="206.3" font-size="7" fill="#1e1e1e" stroke="#1e1e1e" stroke-width="0.15" text-anchor="middle">0960e1_203</text>
<g transform="translate(1190.3,215.5) scale(1.0)">
<path d="M-2.2,-2 A2.9,2.9 0 0,0 -2.2,2 M2.2,-2 A2.9,2.9 0 0,1 2.2,2" stroke="#2f6ca5" stroke-width="0.95" fill="none"/>
<path d="M-4.2,-3.6 A5.4,5.4 0 0,0 -4.2,3.6 M4.2,-3.6 A5.4,5.4 0 0,1 4.2,3.6" stroke="#2f6ca5" stroke-width="0.95" fill="none"/>
<path d="M-6.2,-5 A7.8,7.8 0 0,0 -6.2,5 M6.2,-5 A7.8,7.8 0 0,1 6.2,5" stroke="#2f6ca5" stroke-width="0.95" fill="none"/>
<circle cx="0" cy="0" r="0.8" fill="#2f6ca5"/>
<path d="M-0.8,3 L0.8,3 L3.3,11 L-3.3,11Z" fill="#2f6ca5"/>
<circle cx="0" cy="3" r="1" fill="#e02020"/>
</g>
<text x="1210" y="309.5" font-size="7" fill="#1e1e1e" stroke="#1e1e1e" stroke-width="0.15" text-anchor="middle">096160_205</text>
<g transform="translate(1211,318) scale(1.0)">
<path d="M-2.2,-2 A2.9,2.9 0 0,0 -2.2,2 M2.2,-2 A2.9,2.9 0 0,1 2.2,2" stroke="#2f6ca5" stroke-width="0.95" fill="none"/>
<path d="M-4.2,-3.6 A5.4,5.4 0 0,0 -4.2,3.6 M4.2,-3.6 A5.4,5.4 0 0,1 4.2,3.6" stroke="#2f6ca5" stroke-width="0.95" fill="none"/>
<path d="M-6.2,-5 A7.8,7.8 0 0,0 -6.2,5 M6.2,-5 A7.8,7.8 0 0,1 6.2,5" stroke="#2f6ca5" stroke-width="0.95" fill="none"/>
<circle cx="0" cy="0" r="0.8" fill="#2f6ca5"/>
<path d="M-0.8,3 L0.8,3 L3.3,11 L-3.3,11Z" fill="#2f6ca5"/>
<circle cx="0" cy="3" r="1" fill="#e02020"/>
</g>
<text x="703" y="361" font-size="7" fill="#1e1e1e" stroke="#1e1e1e" stroke-width="0.15" text-anchor="middle">0961A5_206</text>
<g transform="translate(703,369.5) scale(1.0)">
<path d="M-2.2,-2 A2.9,2.9 0 0,0 -2.2,2 M2.2,-2 A2.9,2.9 0 0,1 2.2,2" stroke="#2f6ca5" stroke-width="0.95" fill="none"/>
<path d="M-4.2,-3.6 A5.4,5.4 0 0,0 -4.2,3.6 M4.2,-3.6 A5.4,5.4 0 0,1 4.2,3.6" stroke="#2f6ca5" stroke-width="0.95" fill="none"/>
<path d="M-6.2,-5 A7.8,7.8 0 0,0 -6.2,5 M6.2,-5 A7.8,7.8 0 0,1 6.2,5" stroke="#2f6ca5" stroke-width="0.95" fill="none"/>
<circle cx="0" cy="0" r="0.8" fill="#2f6ca5"/>
<path d="M-0.8,3 L0.8,3 L3.3,11 L-3.3,11Z" fill="#2f6ca5"/>
<circle cx="0" cy="3" r="1" fill="#e02020"/>
</g>
<text x="1166" y="435.5" font-size="7" fill="#1e1e1e" stroke="#1e1e1e" stroke-width="0.15" text-anchor="middle">0961d4_204</text>
<g transform="translate(1166,444) scale(1.0)">
<path d="M-2.2,-2 A2.9,2.9 0 0,0 -2.2,2 M2.2,-2 A2.9,2.9 0 0,1 2.2,2" stroke="#2f6ca5" stroke-width="0.95" fill="none"/>
<path d="M-4.2,-3.6 A5.4,5.4 0 0,0 -4.2,3.6 M4.2,-3.6 A5.4,5.4 0 0,1 4.2,3.6" stroke="#2f6ca5" stroke-width="0.95" fill="none"/>
<path d="M-6.2,-5 A7.8,7.8 0 0,0 -6.2,5 M6.2,-5 A7.8,7.8 0 0,1 6.2,5" stroke="#2f6ca5" stroke-width="0.95" fill="none"/>
<circle cx="0" cy="0" r="0.8" fill="#2f6ca5"/>
<path d="M-0.8,3 L0.8,3 L3.3,11 L-3.3,11Z" fill="#2f6ca5"/>
<circle cx="0" cy="3" r="1" fill="#e02020"/>
</g>
<text x="436" y="473.5" font-size="7" fill="#1e1e1e" stroke="#1e1e1e" stroke-width="0.15" text-anchor="middle">0961d7_202</text>
<g transform="translate(436,482) scale(1.0)">
<path d="M-2.2,-2 A2.9,2.9 0 0,0 -2.2,2 M2.2,-2 A2.9,2.9 0 0,1 2.2,2" stroke="#2f6ca5" stroke-width="0.95" fill="none"/>
<path d="M-4.2,-3.6 A5.4,5.4 0 0,0 -4.2,3.6 M4.2,-3.6 A5.4,5.4 0 0,1 4.2,3.6" stroke="#2f6ca5" stroke-width="0.95" fill="none"/>
<path d="M-6.2,-5 A7.8,7.8 0 0,0 -6.2,5 M6.2,-5 A7.8,7.8 0 0,1 6.2,5" stroke="#2f6ca5" stroke-width="0.95" fill="none"/>
<circle cx="0" cy="0" r="0.8" fill="#2f6ca5"/>
<path d="M-0.8,3 L0.8,3 L3.3,11 L-3.3,11Z" fill="#2f6ca5"/>
<circle cx="0" cy="3" r="1" fill="#e02020"/>
</g>
<g fill="#0b8a0b"><circle cx="469.7" cy="390.5" r="1.35"/><circle cx="445.0" cy="397.0" r="1.35"/><circle cx="466.7" cy="396.0" r="1.35"/><circle cx="480.6" cy="395.0" r="1.35"/><circle cx="478.0" cy="401.0" r="1.35"/><circle cx="486.5" cy="400.0" r="1.35"/><circle cx="473.7" cy="403.7" r="1.35"/><circle cx="477.9" cy="405.0" r="1.35"/><circle cx="489.5" cy="406.0" r="1.35"/><circle cx="477.0" cy="414.0" r="1.35"/><circle cx="493.4" cy="416.0" r="1.35"/><circle cx="465.0" cy="417.6" r="1.35"/><circle cx="487.6" cy="417.0" r="1.35"/><circle cx="460.4" cy="420.7" r="1.35"/><circle cx="472.5" cy="422.5" r="1.35"/><circle cx="479.5" cy="423.0" r="1.35"/><circle cx="453.5" cy="424.0" r="1.35"/><circle cx="474.8" cy="428.0" r="1.35"/><circle cx="484.8" cy="430.0" r="1.35"/><circle cx="488.8" cy="430.6" r="1.35"/><circle cx="497.6" cy="434.0" r="1.35"/><circle cx="484.0" cy="434.0" r="1.35"/><circle cx="481.3" cy="435.7" r="1.35"/><circle cx="474.8" cy="435.7" r="1.35"/><circle cx="491.8" cy="439.0" r="1.35"/><circle cx="495.3" cy="440.0" r="1.35"/><circle cx="482.5" cy="448.5" r="1.35"/><circle cx="488.8" cy="449.7" r="1.35"/><circle cx="494.6" cy="449.7" r="1.35"/><circle cx="507.4" cy="446.7" r="1.35"/><circle cx="513.4" cy="447.4" r="1.35"/><circle cx="495.3" cy="447.4" r="1.35"/><circle cx="492.3" cy="446.7" r="1.35"/><circle cx="502.0" cy="454.0" r="1.35"/><circle cx="495.7" cy="458.0" r="1.35"/><circle cx="476.5" cy="460.6" r="1.35"/><circle cx="498.0" cy="460.8" r="1.35"/><circle cx="510.4" cy="458.5" r="1.35"/><circle cx="505.0" cy="468.0" r="1.35"/><circle cx="491.0" cy="473.0" r="1.35"/><circle cx="510.8" cy="469.4" r="1.35"/><circle cx="540.6" cy="472.5" r="1.35"/><circle cx="514.3" cy="481.7" r="1.35"/><circle cx="517.8" cy="482.0" r="1.35"/><circle cx="524.0" cy="480.0" r="1.35"/><circle cx="563.8" cy="475.7" r="1.35"/><circle cx="493.4" cy="489.6" r="1.35"/><circle cx="500.0" cy="492.7" r="1.35"/><circle cx="500.9" cy="495.0" r="1.35"/><circle cx="521.3" cy="489.0" r="1.35"/><circle cx="523.6" cy="493.8" r="1.35"/><circle cx="526.6" cy="493.8" r="1.35"/><circle cx="530.0" cy="493.8" r="1.35"/><circle cx="534.0" cy="492.7" r="1.35"/><circle cx="536.4" cy="494.3" r="1.35"/><circle cx="542.2" cy="495.0" r="1.35"/><circle cx="548.0" cy="496.0" r="1.35"/><circle cx="517.8" cy="493.4" r="1.35"/><circle cx="515.5" cy="497.3" r="1.35"/><circle cx="518.5" cy="500.3" r="1.35"/><circle cx="509.2" cy="499.6" r="1.35"/><circle cx="489.5" cy="502.0" r="1.35"/><circle cx="481.8" cy="504.3" r="1.35"/><circle cx="500.4" cy="500.8" r="1.35"/><circle cx="528.3" cy="498.0" r="1.35"/><circle cx="532.5" cy="499.0" r="1.35"/><circle cx="537.6" cy="499.6" r="1.35"/><circle cx="540.0" cy="501.3" r="1.35"/><circle cx="533.0" cy="502.0" r="1.35"/><circle cx="526.0" cy="503.8" r="1.35"/><circle cx="530.6" cy="505.0" r="1.35"/><circle cx="526.4" cy="507.8" r="1.35"/><circle cx="529.0" cy="509.0" r="1.35"/><circle cx="542.0" cy="507.3" r="1.35"/><circle cx="522.5" cy="508.5" r="1.35"/><circle cx="518.5" cy="507.8" r="1.35"/><circle cx="540.3" cy="510.8" r="1.35"/><circle cx="493.0" cy="514.7" r="1.35"/><circle cx="497.0" cy="515.2" r="1.35"/><circle cx="500.4" cy="515.2" r="1.35"/><circle cx="504.6" cy="512.4" r="1.35"/><circle cx="509.2" cy="511.2" r="1.35"/><circle cx="516.2" cy="514.7" r="1.35"/><circle cx="519.4" cy="518.2" r="1.35"/><circle cx="523.2" cy="519.0" r="1.35"/><circle cx="527.0" cy="517.0" r="1.35"/><circle cx="531.8" cy="522.9" r="1.35"/><circle cx="529.4" cy="525.2" r="1.35"/><circle cx="534.0" cy="526.0" r="1.35"/><circle cx="546.9" cy="530.5" r="1.35"/><circle cx="548.7" cy="532.0" r="1.35"/><circle cx="517.8" cy="526.3" r="1.35"/><circle cx="521.3" cy="528.7" r="1.35"/><circle cx="526.4" cy="526.8" r="1.35"/><circle cx="533.0" cy="531.0" r="1.35"/><circle cx="516.2" cy="534.0" r="1.35"/><circle cx="505.7" cy="535.2" r="1.35"/><circle cx="488.8" cy="536.0" r="1.35"/><circle cx="484.8" cy="536.0" r="1.35"/><circle cx="471.4" cy="536.3" r="1.35"/><circle cx="477.0" cy="526.8" r="1.35"/><circle cx="490.0" cy="531.0" r="1.35"/><circle cx="493.4" cy="539.8" r="1.35"/><circle cx="520.0" cy="539.8" r="1.35"/><circle cx="548.0" cy="539.0" r="1.35"/><circle cx="556.0" cy="538.0" r="1.35"/><circle cx="573.6" cy="539.0" r="1.35"/><circle cx="580.5" cy="540.3" r="1.35"/><circle cx="483.0" cy="522.9" r="1.35"/><circle cx="474.8" cy="516.6" r="1.35"/><circle cx="487.6" cy="516.0" r="1.35"/><circle cx="509.0" cy="522.0" r="1.35"/><circle cx="556.0" cy="511.0" r="1.35"/><circle cx="560.8" cy="500.8" r="1.35"/><circle cx="562.7" cy="503.0" r="1.35"/><circle cx="579.4" cy="499.6" r="1.35"/><circle cx="585.2" cy="525.2" r="1.35"/><circle cx="586.3" cy="522.9" r="1.35"/><circle cx="594.5" cy="522.9" r="1.35"/><circle cx="596.8" cy="525.2" r="1.35"/><circle cx="600.3" cy="514.7" r="1.35"/><circle cx="593.3" cy="509.0" r="1.35"/><circle cx="599.0" cy="504.3" r="1.35"/><circle cx="601.4" cy="498.5" r="1.35"/><circle cx="594.5" cy="498.5" r="1.35"/><circle cx="600.3" cy="496.0" r="1.35"/><circle cx="593.3" cy="505.4" r="1.35"/><circle cx="588.7" cy="500.8" r="1.35"/><circle cx="584.0" cy="491.5" r="1.35"/><circle cx="592.1" cy="486.9" r="1.35"/><circle cx="594.5" cy="480.0" r="1.35"/><circle cx="597.5" cy="478.7" r="1.35"/><circle cx="609.6" cy="485.7" r="1.35"/><circle cx="609.1" cy="489.2" r="1.35"/><circle cx="620.7" cy="484.5" r="1.35"/><circle cx="611.4" cy="428.3" r="1.35"/><circle cx="629.3" cy="412.5" r="1.35"/><circle cx="585.2" cy="412.5" r="1.35"/><circle cx="593.3" cy="381.9" r="1.35"/><circle cx="564.3" cy="475.2" r="1.35"/><circle cx="589.8" cy="447.4" r="1.35"/><circle cx="602.6" cy="470.6" r="1.35"/><circle cx="612.6" cy="447.8" r="1.35"/><circle cx="511.5" cy="483.0" r="1.35"/><circle cx="514.8" cy="480.0" r="1.35"/><circle cx="524.8" cy="478.7" r="1.35"/><circle cx="510.8" cy="458.5" r="1.35"/><circle cx="502.7" cy="447.0" r="1.35"/><circle cx="431.2" cy="274.2" r="1.35"/><circle cx="432.7" cy="276.7" r="1.35"/><circle cx="447.0" cy="282.8" r="1.35"/><circle cx="441.9" cy="297.2" r="1.35"/><circle cx="454.4" cy="303.7" r="1.35"/><circle cx="447.0" cy="310.5" r="1.35"/><circle cx="434.9" cy="318.3" r="1.35"/><circle cx="439.8" cy="329.5" r="1.35"/><circle cx="442.5" cy="331.0" r="1.35"/><circle cx="458.5" cy="333.6" r="1.35"/><circle cx="467.1" cy="340.2" r="1.35"/><circle cx="447.0" cy="350.9" r="1.35"/><circle cx="456.4" cy="357.6" r="1.35"/><circle cx="470.6" cy="365.8" r="1.35"/><circle cx="455.2" cy="372.6" r="1.35"/><circle cx="433.9" cy="384.9" r="1.35"/><circle cx="433.9" cy="392.5" r="1.35"/><circle cx="445.2" cy="397.6" r="1.35"/><circle cx="469.8" cy="390.4" r="1.35"/><circle cx="466.5" cy="396.4" r="1.35"/><circle cx="480.6" cy="395.1" r="1.35"/><circle cx="486.6" cy="399.2" r="1.35"/><circle cx="847.3" cy="348.4" r="1.35"/><circle cx="846.0" cy="353.9" r="1.35"/><circle cx="849.8" cy="355.7" r="1.35"/><circle cx="846.0" cy="366.9" r="1.35"/><circle cx="853.5" cy="366.2" r="1.35"/><circle cx="858.9" cy="369.6" r="1.35"/><circle cx="861.0" cy="377.8" r="1.35"/><circle cx="863.7" cy="378.9" r="1.35"/><circle cx="858.9" cy="380.5" r="1.35"/><circle cx="856.9" cy="383.3" r="1.35"/><circle cx="859.6" cy="384.0" r="1.35"/><circle cx="861.7" cy="382.6" r="1.35"/><circle cx="866.4" cy="386.0" r="1.35"/><circle cx="846.0" cy="381.6" r="1.35"/><circle cx="857.6" cy="386.0" r="1.35"/><circle cx="854.2" cy="388.7" r="1.35"/><circle cx="852.8" cy="390.1" r="1.35"/><circle cx="858.3" cy="390.1" r="1.35"/><circle cx="860.3" cy="387.4" r="1.35"/><circle cx="856.2" cy="392.8" r="1.35"/><circle cx="839.8" cy="400.4" r="1.35"/><circle cx="842.5" cy="401.7" r="1.35"/><circle cx="843.9" cy="404.5" r="1.35"/><circle cx="845.3" cy="407.9" r="1.35"/><circle cx="841.9" cy="408.6" r="1.35"/><circle cx="848.0" cy="409.2" r="1.35"/><circle cx="852.1" cy="404.5" r="1.35"/><circle cx="850.7" cy="399.0" r="1.35"/><circle cx="852.8" cy="401.7" r="1.35"/><circle cx="872.6" cy="399.0" r="1.35"/><circle cx="875.3" cy="401.0" r="1.35"/><circle cx="874.0" cy="404.5" r="1.35"/><circle cx="871.2" cy="404.9" r="1.35"/><circle cx="869.2" cy="399.0" r="1.35"/><circle cx="876.0" cy="407.9" r="1.35"/><circle cx="878.0" cy="408.6" r="1.35"/><circle cx="875.3" cy="411.3" r="1.35"/><circle cx="873.3" cy="408.6" r="1.35"/><circle cx="867.8" cy="409.9" r="1.35"/><circle cx="844.6" cy="412.0" r="1.35"/><circle cx="846.6" cy="414.7" r="1.35"/><circle cx="846.0" cy="417.4" r="1.35"/><circle cx="850.7" cy="414.0" r="1.35"/><circle cx="850.0" cy="418.1" r="1.35"/><circle cx="866.4" cy="416.0" r="1.35"/><circle cx="865.0" cy="418.8" r="1.35"/><circle cx="868.5" cy="419.5" r="1.35"/><circle cx="874.0" cy="417.4" r="1.35"/><circle cx="878.7" cy="416.0" r="1.35"/><circle cx="853.5" cy="418.8" r="1.35"/><circle cx="856.9" cy="418.1" r="1.35"/><circle cx="862.3" cy="420.8" r="1.35"/><circle cx="847.3" cy="424.3" r="1.35"/><circle cx="851.4" cy="425.6" r="1.35"/><circle cx="856.2" cy="424.3" r="1.35"/><circle cx="860.3" cy="425.6" r="1.35"/><circle cx="863.7" cy="427.0" r="1.35"/><circle cx="843.9" cy="420.2" r="1.35"/><circle cx="904.3" cy="431.7" r="1.35"/><circle cx="912.5" cy="432.8" r="1.35"/><circle cx="915.2" cy="435.8" r="1.35"/><circle cx="908.4" cy="438.5" r="1.35"/><circle cx="913.6" cy="438.9" r="1.35"/><circle cx="915.9" cy="441.7" r="1.35"/><circle cx="911.4" cy="442.6" r="1.35"/><circle cx="923.7" cy="442.6" r="1.35"/><circle cx="934.1" cy="444.8" r="1.35"/><circle cx="909.1" cy="446.4" r="1.35"/><circle cx="907.7" cy="449.2" r="1.35"/><circle cx="911.1" cy="450.3" r="1.35"/><circle cx="893.4" cy="448.1" r="1.35"/><circle cx="942.6" cy="448.9" r="1.35"/><circle cx="948.7" cy="449.2" r="1.35"/><circle cx="941.9" cy="451.9" r="1.35"/><circle cx="932.3" cy="454.0" r="1.35"/><circle cx="947.3" cy="454.6" r="1.35"/><circle cx="942.6" cy="456.0" r="1.35"/><circle cx="940.5" cy="459.0" r="1.35"/><circle cx="928.2" cy="461.2" r="1.35"/><circle cx="931.6" cy="462.8" r="1.35"/><circle cx="935.0" cy="463.1" r="1.35"/><circle cx="894.1" cy="462.2" r="1.35"/><circle cx="896.1" cy="461.5" r="1.35"/><circle cx="898.9" cy="463.1" r="1.35"/><circle cx="903.0" cy="462.8" r="1.35"/><circle cx="905.0" cy="460.8" r="1.35"/><circle cx="907.7" cy="464.2" r="1.35"/><circle cx="911.1" cy="461.5" r="1.35"/><circle cx="915.2" cy="460.1" r="1.35"/><circle cx="916.6" cy="462.8" r="1.35"/><circle cx="918.0" cy="466.3" r="1.35"/><circle cx="913.2" cy="466.3" r="1.35"/><circle cx="910.5" cy="468.3" r="1.35"/><circle cx="907.0" cy="471.0" r="1.35"/><circle cx="911.8" cy="471.7" r="1.35"/><circle cx="920.7" cy="472.4" r="1.35"/><circle cx="925.5" cy="467.0" r="1.35"/><circle cx="931.6" cy="467.6" r="1.35"/><circle cx="937.8" cy="468.3" r="1.35"/><circle cx="939.8" cy="467.6" r="1.35"/><circle cx="949.4" cy="465.6" r="1.35"/><circle cx="956.9" cy="469.0" r="1.35"/><circle cx="960.0" cy="473.1" r="1.35"/><circle cx="900.9" cy="473.8" r="1.35"/><circle cx="903.6" cy="476.5" r="1.35"/><circle cx="896.1" cy="469.0" r="1.35"/><circle cx="898.9" cy="467.0" r="1.35"/><circle cx="926.9" cy="475.8" r="1.35"/><circle cx="933.7" cy="474.9" r="1.35"/><circle cx="938.5" cy="476.2" r="1.35"/><circle cx="944.6" cy="479.0" r="1.35"/><circle cx="950.8" cy="480.6" r="1.35"/><circle cx="954.9" cy="480.6" r="1.35"/><circle cx="957.6" cy="479.0" r="1.35"/><circle cx="894.8" cy="467.0" r="1.35"/><circle cx="803.2" cy="413.7" r="1.35"/><circle cx="802.5" cy="417.8" r="1.35"/><circle cx="800.5" cy="423.9" r="1.35"/><circle cx="798.4" cy="428.7" r="1.35"/><circle cx="796.1" cy="435.2" r="1.35"/><circle cx="794.3" cy="441.0" r="1.35"/><circle cx="791.6" cy="445.8" r="1.35"/><circle cx="791.6" cy="449.2" r="1.35"/><circle cx="790.2" cy="454.6" r="1.35"/><circle cx="795.7" cy="456.0" r="1.35"/><circle cx="844.2" cy="432.8" r="1.35"/><circle cx="848.3" cy="434.8" r="1.35"/><circle cx="851.0" cy="438.3" r="1.35"/><circle cx="843.5" cy="440.3" r="1.35"/><circle cx="846.9" cy="443.0" r="1.35"/><circle cx="851.0" cy="445.1" r="1.35"/><circle cx="854.5" cy="443.7" r="1.35"/><circle cx="856.5" cy="447.1" r="1.35"/><circle cx="848.3" cy="449.2" r="1.35"/><circle cx="852.4" cy="450.5" r="1.35"/><circle cx="851.0" cy="452.6" r="1.35"/><circle cx="855.8" cy="452.6" r="1.35"/><circle cx="858.6" cy="454.0" r="1.35"/><circle cx="860.6" cy="457.4" r="1.35"/><circle cx="854.5" cy="458.0" r="1.35"/><circle cx="856.5" cy="461.5" r="1.35"/><circle cx="859.2" cy="462.8" r="1.35"/><circle cx="862.0" cy="464.2" r="1.35"/><circle cx="857.9" cy="465.6" r="1.35"/><circle cx="865.4" cy="468.3" r="1.35"/><circle cx="868.8" cy="471.7" r="1.35"/><circle cx="864.7" cy="471.7" r="1.35"/><circle cx="858.6" cy="471.7" r="1.35"/><circle cx="858.6" cy="478.6" r="1.35"/><circle cx="862.0" cy="442.3" r="1.35"/><circle cx="862.7" cy="434.2" r="1.35"/><circle cx="877.0" cy="430.0" r="1.35"/><circle cx="878.4" cy="417.8" r="1.35"/><circle cx="878.4" cy="408.2" r="1.35"/><circle cx="874.3" cy="402.7" r="1.35"/><circle cx="845.6" cy="402.7" r="1.35"/><circle cx="842.8" cy="408.2" r="1.35"/><circle cx="849.7" cy="413.7" r="1.35"/><circle cx="844.2" cy="417.8" r="1.35"/><circle cx="852.4" cy="420.5" r="1.35"/><circle cx="856.5" cy="423.9" r="1.35"/><circle cx="844.2" cy="428.7" r="1.35"/><circle cx="848.3" cy="428.7" r="1.35"/><circle cx="853.8" cy="430.0" r="1.35"/><circle cx="859.2" cy="432.8" r="1.35"/><circle cx="511.7" cy="508.6" r="1.35"/><circle cx="544.7" cy="502.9" r="1.35"/><circle cx="515.5" cy="510.2" r="1.35"/><circle cx="492.9" cy="505.7" r="1.35"/><circle cx="524.1" cy="522.6" r="1.35"/><circle cx="486.6" cy="493.2" r="1.35"/><circle cx="528.5" cy="477.5" r="1.35"/><circle cx="525.8" cy="511.9" r="1.35"/><circle cx="517.0" cy="478.6" r="1.35"/><circle cx="493.3" cy="489.5" r="1.35"/><circle cx="482.1" cy="502.8" r="1.35"/><circle cx="510.8" cy="525.5" r="1.35"/><circle cx="516.3" cy="513.4" r="1.35"/><circle cx="515.0" cy="514.7" r="1.35"/><circle cx="512.0" cy="491.7" r="1.35"/><circle cx="538.8" cy="517.5" r="1.35"/><circle cx="502.1" cy="488.8" r="1.35"/><circle cx="500.2" cy="479.2" r="1.35"/><circle cx="533.6" cy="499.0" r="1.35"/><circle cx="539.3" cy="498.2" r="1.35"/><circle cx="543.7" cy="503.2" r="1.35"/><circle cx="548.6" cy="498.8" r="1.35"/><circle cx="485.1" cy="512.8" r="1.35"/><circle cx="534.5" cy="491.2" r="1.35"/><circle cx="486.1" cy="495.0" r="1.35"/><circle cx="488.3" cy="489.8" r="1.35"/><circle cx="535.8" cy="485.7" r="1.35"/><circle cx="519.2" cy="501.8" r="1.35"/><circle cx="493.3" cy="518.9" r="1.35"/><circle cx="489.2" cy="513.6" r="1.35"/><circle cx="488.2" cy="500.2" r="1.35"/><circle cx="494.9" cy="491.2" r="1.35"/><circle cx="501.3" cy="528.1" r="1.35"/><circle cx="494.7" cy="498.7" r="1.35"/><circle cx="539.8" cy="513.5" r="1.35"/><circle cx="494.9" cy="490.5" r="1.35"/><circle cx="534.1" cy="494.7" r="1.35"/><circle cx="500.7" cy="479.4" r="1.35"/><circle cx="486.3" cy="510.0" r="1.35"/><circle cx="497.0" cy="511.1" r="1.35"/><circle cx="506.0" cy="502.2" r="1.35"/><circle cx="547.1" cy="504.0" r="1.35"/><circle cx="520.2" cy="527.0" r="1.35"/><circle cx="492.8" cy="484.2" r="1.35"/><circle cx="497.5" cy="486.4" r="1.35"/><circle cx="867.7" cy="406.2" r="1.35"/><circle cx="854.8" cy="376.2" r="1.35"/><circle cx="849.7" cy="412.3" r="1.35"/><circle cx="850.2" cy="419.4" r="1.35"/><circle cx="859.7" cy="387.6" r="1.35"/><circle cx="847.9" cy="413.2" r="1.35"/><circle cx="858.7" cy="421.1" r="1.35"/><circle cx="860.2" cy="386.8" r="1.35"/><circle cx="855.5" cy="373.6" r="1.35"/><circle cx="847.9" cy="392.1" r="1.35"/><circle cx="859.0" cy="377.9" r="1.35"/><circle cx="853.1" cy="423.5" r="1.35"/><circle cx="862.4" cy="405.1" r="1.35"/><circle cx="843.6" cy="408.2" r="1.35"/><circle cx="856.5" cy="413.8" r="1.35"/><circle cx="845.1" cy="402.8" r="1.35"/><circle cx="863.6" cy="424.0" r="1.35"/><circle cx="863.6" cy="412.2" r="1.35"/><circle cx="852.9" cy="411.1" r="1.35"/><circle cx="854.7" cy="417.4" r="1.35"/><circle cx="867.2" cy="404.4" r="1.35"/><circle cx="860.5" cy="392.9" r="1.35"/><circle cx="859.3" cy="406.5" r="1.35"/><circle cx="845.2" cy="408.4" r="1.35"/><circle cx="863.4" cy="393.3" r="1.35"/><circle cx="863.6" cy="404.9" r="1.35"/><circle cx="855.3" cy="420.3" r="1.35"/><circle cx="845.3" cy="415.0" r="1.35"/><circle cx="843.8" cy="406.1" r="1.35"/><circle cx="856.5" cy="383.8" r="1.35"/><circle cx="862.6" cy="399.8" r="1.35"/><circle cx="860.2" cy="425.2" r="1.35"/><circle cx="851.4" cy="410.7" r="1.35"/><circle cx="848.7" cy="380.2" r="1.35"/><circle cx="868.4" cy="409.6" r="1.35"/><circle cx="855.4" cy="423.5" r="1.35"/><circle cx="852.2" cy="410.0" r="1.35"/><circle cx="848.6" cy="395.9" r="1.35"/><circle cx="867.6" cy="393.1" r="1.35"/><circle cx="859.3" cy="389.0" r="1.35"/><circle cx="846.8" cy="399.8" r="1.35"/><circle cx="866.4" cy="420.9" r="1.35"/><circle cx="862.9" cy="427.0" r="1.35"/><circle cx="850.8" cy="380.1" r="1.35"/><circle cx="855.6" cy="386.5" r="1.35"/><circle cx="849.0" cy="394.8" r="1.35"/><circle cx="860.5" cy="399.6" r="1.35"/><circle cx="851.8" cy="420.3" r="1.35"/><circle cx="870.5" cy="397.1" r="1.35"/><circle cx="862.8" cy="404.2" r="1.35"/><circle cx="854.6" cy="464.6" r="1.35"/><circle cx="857.2" cy="426.2" r="1.35"/><circle cx="863.9" cy="436.9" r="1.35"/><circle cx="860.3" cy="447.3" r="1.35"/><circle cx="860.3" cy="457.8" r="1.35"/><circle cx="861.3" cy="435.0" r="1.35"/><circle cx="857.6" cy="433.9" r="1.35"/><circle cx="849.2" cy="448.6" r="1.35"/><circle cx="861.9" cy="434.0" r="1.35"/><circle cx="853.9" cy="442.3" r="1.35"/><circle cx="861.6" cy="451.0" r="1.35"/><circle cx="860.1" cy="462.8" r="1.35"/><circle cx="856.1" cy="464.6" r="1.35"/><circle cx="865.8" cy="461.1" r="1.35"/><circle cx="851.3" cy="447.7" r="1.35"/><circle cx="860.3" cy="470.5" r="1.35"/><circle cx="855.8" cy="453.4" r="1.35"/><circle cx="864.8" cy="464.8" r="1.35"/><circle cx="866.0" cy="448.2" r="1.35"/><circle cx="860.7" cy="435.2" r="1.35"/><circle cx="862.0" cy="465.9" r="1.35"/><circle cx="860.5" cy="460.9" r="1.35"/><circle cx="852.8" cy="470.0" r="1.35"/><circle cx="858.7" cy="464.5" r="1.35"/><circle cx="854.8" cy="470.5" r="1.35"/><circle cx="864.4" cy="442.4" r="1.35"/><circle cx="850.5" cy="447.0" r="1.35"/><circle cx="858.9" cy="463.4" r="1.35"/><circle cx="857.8" cy="426.4" r="1.35"/><circle cx="863.4" cy="433.6" r="1.35"/><circle cx="855.0" cy="464.4" r="1.35"/><circle cx="858.3" cy="461.2" r="1.35"/><circle cx="864.1" cy="459.5" r="1.35"/><circle cx="866.0" cy="449.6" r="1.35"/><circle cx="853.0" cy="451.3" r="1.35"/><circle cx="854.2" cy="461.4" r="1.35"/><circle cx="860.5" cy="451.1" r="1.35"/><circle cx="864.2" cy="453.0" r="1.35"/><circle cx="854.6" cy="444.1" r="1.35"/><circle cx="852.7" cy="467.5" r="1.35"/><circle cx="866.4" cy="451.2" r="1.35"/><circle cx="859.3" cy="435.0" r="1.35"/><circle cx="858.6" cy="450.2" r="1.35"/><circle cx="859.9" cy="426.4" r="1.35"/><circle cx="866.4" cy="450.8" r="1.35"/><circle cx="847.6" cy="431.0" r="1.35"/><circle cx="851.5" cy="424.8" r="1.35"/><circle cx="854.6" cy="416.3" r="1.35"/><circle cx="850.9" cy="423.3" r="1.35"/><circle cx="844.5" cy="424.5" r="1.35"/><circle cx="841.0" cy="423.7" r="1.35"/><circle cx="849.4" cy="421.3" r="1.35"/><circle cx="842.6" cy="427.4" r="1.35"/><circle cx="842.7" cy="419.5" r="1.35"/><circle cx="854.5" cy="421.4" r="1.35"/><circle cx="846.5" cy="427.4" r="1.35"/><circle cx="840.5" cy="429.6" r="1.35"/><circle cx="840.9" cy="425.2" r="1.35"/><circle cx="844.0" cy="419.0" r="1.35"/><circle cx="850.7" cy="423.7" r="1.35"/><circle cx="847.0" cy="423.3" r="1.35"/><circle cx="850.7" cy="418.2" r="1.35"/><circle cx="842.9" cy="427.6" r="1.35"/><circle cx="853.3" cy="425.6" r="1.35"/><circle cx="858.4" cy="427.2" r="1.35"/><circle cx="791.6" cy="456.2" r="1.35"/><circle cx="791.8" cy="455.8" r="1.35"/><circle cx="792.9" cy="452.2" r="1.35"/><circle cx="791.7" cy="451.8" r="1.35"/><circle cx="792.0" cy="449.9" r="1.35"/><circle cx="794.6" cy="445.2" r="1.35"/><circle cx="793.3" cy="444.8" r="1.35"/><circle cx="793.9" cy="440.8" r="1.35"/><circle cx="796.3" cy="439.6" r="1.35"/><circle cx="796.7" cy="436.6" r="1.35"/><circle cx="796.2" cy="436.1" r="1.35"/><circle cx="795.6" cy="432.5" r="1.35"/><circle cx="798.2" cy="432.5" r="1.35"/><circle cx="799.6" cy="428.0" r="1.35"/><circle cx="798.9" cy="427.8" r="1.35"/><circle cx="799.4" cy="425.4" r="1.35"/><circle cx="799.1" cy="421.4" r="1.35"/><circle cx="799.4" cy="419.2" r="1.35"/><circle cx="801.4" cy="418.5" r="1.35"/><circle cx="802.0" cy="415.2" r="1.35"/><circle cx="801.5" cy="413.3" r="1.35"/><circle cx="804.0" cy="413.5" r="1.35"/><circle cx="913.1" cy="467.9" r="1.35"/><circle cx="906.3" cy="459.0" r="1.35"/><circle cx="915.8" cy="457.9" r="1.35"/><circle cx="920.0" cy="445.4" r="1.35"/><circle cx="925.1" cy="470.3" r="1.35"/><circle cx="899.1" cy="458.6" r="1.35"/><circle cx="927.0" cy="457.2" r="1.35"/><circle cx="899.8" cy="450.0" r="1.35"/><circle cx="915.6" cy="445.5" r="1.35"/><circle cx="934.7" cy="469.1" r="1.35"/><circle cx="925.2" cy="470.8" r="1.35"/><circle cx="921.5" cy="457.1" r="1.35"/><circle cx="920.0" cy="460.1" r="1.35"/><circle cx="902.9" cy="472.3" r="1.35"/><circle cx="927.2" cy="468.3" r="1.35"/><circle cx="930.7" cy="457.2" r="1.35"/><circle cx="924.7" cy="468.0" r="1.35"/><circle cx="928.3" cy="457.2" r="1.35"/><circle cx="926.1" cy="447.1" r="1.35"/><circle cx="907.1" cy="459.1" r="1.35"/><circle cx="921.9" cy="463.7" r="1.35"/><circle cx="923.3" cy="455.1" r="1.35"/><circle cx="923.0" cy="462.1" r="1.35"/><circle cx="916.7" cy="456.7" r="1.35"/><circle cx="925.1" cy="467.9" r="1.35"/><circle cx="592.8" cy="516.9" r="1.35"/><circle cx="584.2" cy="500.1" r="1.35"/><circle cx="587.0" cy="484.9" r="1.35"/><circle cx="584.0" cy="525.3" r="1.35"/><circle cx="591.2" cy="505.4" r="1.35"/><circle cx="601.2" cy="508.4" r="1.35"/><circle cx="592.3" cy="518.0" r="1.35"/><circle cx="581.8" cy="503.6" r="1.35"/><circle cx="582.1" cy="504.8" r="1.35"/><circle cx="592.7" cy="482.9" r="1.35"/><circle cx="600.7" cy="501.0" r="1.35"/><circle cx="590.6" cy="509.9" r="1.35"/></g>
<circle cx="354" cy="503" r="1.25" fill="#0b8a0b"/>
<text x="529.7" y="437.2" font-size="7" fill="#1e1e1e" stroke="#1e1e1e" stroke-width="0.15" text-anchor="middle">A6806</text>
<path d="M522.5,446.7 A7.2,7.2 0 1,1 536.9000000000001,446.7 C536.9000000000001,450.7 532.7,454.7 529.7,460.3 C526.7,454.7 522.5,450.7 522.5,446.7Z" fill="#f0952c"/>
<path d="M523.2,449.7 L536.2,449.7 C534.7,452.7 532.7,455.2 529.7,460.3 C526.7,455.2 524.7,452.7 523.2,449.7Z" fill="#f5b259" opacity="0.8"/>
<circle cx="529.7" cy="446.4" r="2.7" fill="#d6eaf7"/>
<circle cx="529.7" cy="450.3" r="1.1" fill="#e00000"/>
<text x="529.7" y="467.2" font-size="7" fill="#1e1e1e" stroke="#1e1e1e" stroke-width="0.15" text-anchor="middle">[06]2.51,3.27,1.50</text>
<text x="612.2" y="438.8" font-size="7" fill="#1e1e1e" stroke="#1e1e1e" stroke-width="0.15" text-anchor="middle">AEBED</text>
<path d="M605.0,448.3 A7.2,7.2 0 1,1 619.4000000000001,448.3 C619.4000000000001,452.3 615.2,456.3 612.2,461.90000000000003 C609.2,456.3 605.0,452.3 605.0,448.3Z" fill="#f0952c"/>
<path d="M605.7,451.3 L618.7,451.3 C617.2,454.3 615.2,456.8 612.2,461.90000000000003 C609.2,456.8 607.2,454.3 605.7,451.3Z" fill="#f5b259" opacity="0.8"/>
<circle cx="612.2" cy="448.0" r="2.7" fill="#d6eaf7"/>
<circle cx="612.2" cy="451.90000000000003" r="1.1" fill="#e00000"/>
<text x="612.2" y="468.8" font-size="7" fill="#1e1e1e" stroke="#1e1e1e" stroke-width="0.15" text-anchor="middle">[3E]3.60,3.29,1.50</text>
<text x="585" y="483.9" font-size="7" fill="#1e1e1e" stroke="#1e1e1e" stroke-width="0.15" text-anchor="middle">AEBB3</text>
<path d="M577.8,493.4 A7.2,7.2 0 1,1 592.2,493.4 C592.2,497.4 588,501.4 585,507.0 C582,501.4 577.8,497.4 577.8,493.4Z" fill="#f0952c"/>
<path d="M578.5,496.4 L591.5,496.4 C590,499.4 588,501.9 585,507.0 C582,501.9 580,499.4 578.5,496.4Z" fill="#f5b259" opacity="0.8"/>
<circle cx="585" cy="493.09999999999997" r="2.7" fill="#d6eaf7"/>
<circle cx="585" cy="497.0" r="1.1" fill="#e00000"/>
<text x="585" y="513.9" font-size="7" fill="#1e1e1e" stroke="#1e1e1e" stroke-width="0.15" text-anchor="middle">[54]3.24,3.88,1.50</text>
<text x="569" y="518.0" font-size="7" fill="#1e1e1e" stroke="#1e1e1e" stroke-width="0.15" text-anchor="middle">AEBB9</text>
<path d="M561.8,527.5 A7.2,7.2 0 1,1 576.2,527.5 C576.2,531.5 572,535.5 569,541.1 C566,535.5 561.8,531.5 561.8,527.5Z" fill="#f0952c"/>
<path d="M562.5,530.5 L575.5,530.5 C574,533.5 572,536.0 569,541.1 C566,536.0 564,533.5 562.5,530.5Z" fill="#f5b259" opacity="0.8"/>
<circle cx="569" cy="527.2" r="2.7" fill="#d6eaf7"/>
<circle cx="569" cy="531.1" r="1.1" fill="#e00000"/>
<text x="569" y="548.0" font-size="7" fill="#1e1e1e" stroke="#1e1e1e" stroke-width="0.15" text-anchor="middle">[14]3.03,4.34,1.50</text>
<text x="419" y="473.0" font-size="7" fill="#1e1e1e" stroke="#1e1e1e" stroke-width="0.15" text-anchor="middle">AEBA2</text>
<path d="M411.8,482.5 A7.2,7.2 0 1,1 426.2,482.5 C426.2,486.5 422,490.5 419,496.1 C416,490.5 411.8,486.5 411.8,482.5Z" fill="#f0952c"/>
<path d="M412.5,485.5 L425.5,485.5 C424,488.5 422,491.0 419,496.1 C416,491.0 414,488.5 412.5,485.5Z" fill="#f5b259" opacity="0.8"/>
<circle cx="419" cy="482.2" r="2.7" fill="#d6eaf7"/>
<circle cx="419" cy="486.1" r="1.1" fill="#e00000"/>
<text x="419" y="503.0" font-size="7" fill="#1e1e1e" stroke="#1e1e1e" stroke-width="0.15" text-anchor="middle">[22]1.04,3.73,1.50</text>
<text x="858.9" y="345.5" font-size="7" fill="#1e1e1e" stroke="#1e1e1e" stroke-width="0.15" text-anchor="middle">A6865</text>
<path d="M851.6999999999999,355 A7.2,7.2 0 1,1 866.1,355 C866.1,359 861.9,363 858.9,368.6 C855.9,363 851.6999999999999,359 851.6999999999999,355Z" fill="#f0952c"/>
<path d="M852.4,358 L865.4,358 C863.9,361 861.9,363.5 858.9,368.6 C855.9,363.5 853.9,361 852.4,358Z" fill="#f5b259" opacity="0.8"/>
<circle cx="858.9" cy="354.7" r="2.7" fill="#d6eaf7"/>
<circle cx="858.9" cy="358.6" r="1.1" fill="#e00000"/>
<text x="858.9" y="375.5" font-size="7" fill="#1e1e1e" stroke="#1e1e1e" stroke-width="0.15" text-anchor="middle">[7D]6.87,2.06,0.75</text>
<text x="861" y="395.9" font-size="7" fill="#1e1e1e" stroke="#1e1e1e" stroke-width="0.15" text-anchor="middle">AE08A</text>
<path d="M853.8,405.4 A7.2,7.2 0 1,1 868.2,405.4 C868.2,409.4 864,413.4 861,419.0 C858,413.4 853.8,409.4 853.8,405.4Z" fill="#f0952c"/>
<path d="M854.5,408.4 L867.5,408.4 C866,411.4 864,413.9 861,419.0 C858,413.9 856,411.4 854.5,408.4Z" fill="#f5b259" opacity="0.8"/>
<circle cx="861" cy="405.09999999999997" r="2.7" fill="#d6eaf7"/>
<circle cx="861" cy="409.0" r="1.1" fill="#e00000"/>
<text x="861" y="425.9" font-size="7" fill="#1e1e1e" stroke="#1e1e1e" stroke-width="0.15" text-anchor="middle">[8F]6.86,2.72,0.79</text>
<text x="792.2" y="456.0" font-size="7" fill="#1e1e1e" stroke="#1e1e1e" stroke-width="0.15" text-anchor="middle">94DF0</text>
<path d="M785.0,465.5 A7.2,7.2 0 1,1 799.4000000000001,465.5 C799.4000000000001,469.5 795.2,473.5 792.2,479.1 C789.2,473.5 785.0,469.5 785.0,465.5Z" fill="#f0952c"/>
<path d="M785.7,468.5 L798.7,468.5 C797.2,471.5 795.2,474.0 792.2,479.1 C789.2,474.0 787.2,471.5 785.7,468.5Z" fill="#f5b259" opacity="0.8"/>
<circle cx="792.2" cy="465.2" r="2.7" fill="#d6eaf7"/>
<circle cx="792.2" cy="469.1" r="1.1" fill="#e00000"/>
<text x="792.2" y="486.0" font-size="7" fill="#1e1e1e" stroke="#1e1e1e" stroke-width="0.15" text-anchor="middle">[30]5.99,3.51,1.50</text>
<text x="897.7" y="427.5" font-size="7" fill="#1e1e1e" stroke="#1e1e1e" stroke-width="0.15" text-anchor="middle">A40FB</text>
<path d="M890.5,437 A7.2,7.2 0 1,1 904.9000000000001,437 C904.9000000000001,441 900.7,445 897.7,450.6 C894.7,445 890.5,441 890.5,437Z" fill="#f0952c"/>
<path d="M891.2,440 L904.2,440 C902.7,443 900.7,445.5 897.7,450.6 C894.7,445.5 892.7,443 891.2,440Z" fill="#f5b259" opacity="0.8"/>
<circle cx="897.7" cy="436.7" r="2.7" fill="#d6eaf7"/>
<circle cx="897.7" cy="440.6" r="1.1" fill="#e00000"/>
<text x="897.7" y="457.5" font-size="7" fill="#1e1e1e" stroke="#1e1e1e" stroke-width="0.15" text-anchor="middle">[37]7.37,3.14,0.79</text>
<path transform="translate(1161.8,383) scale(1.0)" d="M4,1.5 Q3.5,5.5 0.8,8.2 M4,4.2 Q5.5,6.8 7.8,8.2 M8.2,4.6 H11 M11,0 V9.8 M3,9.8 V14 H13.5" fill="none" stroke="#3d5d7d" stroke-width="1.1"/>
<path transform="translate(1176.6,383) scale(1.0)" d="M1.5,1.2 V8.2 H6.8 V1.2 M1.5,4.6 H6.8 M10.5,0 V10 M10.5,4.6 H13.3 M3,10.3 V14 H13.5" fill="none" stroke="#3d5d7d" stroke-width="1.1"/>
<path transform="translate(1156.0,436.3) scale(1.0)" d="M1.2,1.2 V7.5 H5.5 M8.2,0 V9.5 M11.8,0 V9.5 M8.2,4.4 H11.8 M7,9.8 m-4.2,2.3 a4.2,2.5 0 1,0 8.4,0 a4.2,2.5 0 1,0 -8.4,0" fill="none" stroke="#3d5d7d" stroke-width="1.1"/>
<path transform="translate(1170.6,436.3) scale(1.0)" d="M0.8,1.5 H7.2 M4,1.5 Q3.5,5.5 0.8,8.2 M4,4.5 Q5.5,6.8 7.8,8.2 M10.5,0 V9.5 M10.5,4.5 H13.3 M3,12.3 a4.2,2.5 0 1,0 8.4,0 a4.2,2.5 0 1,0 -8.4,0" fill="none" stroke="#3d5d7d" stroke-width="1.1"/>
<path transform="translate(1185.2,436.3) scale(1.0)" d="M2.2,2 H12 V8.5 M7,8.5 V12.2 M0.5,12.5 H14.5" fill="none" stroke="#3d5d7d" stroke-width="1.1"/>
<path transform="translate(1092.0,507) scale(1.0)" d="M4.8,1 Q4.2,5.5 0.8,8.5 M4.8,4.5 Q6.5,7 9,8.5 M12,0 V9.8 M3,12.3 a4.2,2.5 0 1,0 8.4,0 a4.2,2.5 0 1,0 -8.4,0" fill="none" stroke="#3d5d7d" stroke-width="1.1"/>
<path transform="translate(1107.0,507) scale(1.0)" d="M1.8,1.8 H12 V9 M2,5.4 H12 M0.5,12.2 H14.5" fill="none" stroke="#3d5d7d" stroke-width="1.1"/>
<path transform="translate(1122.0,507) scale(1.0)" d="M7.2,1.5 H1.2 V13 H7.5 M9.8,0 V15 M13.2,0 V15 M9.8,6.5 H13.2" fill="none" stroke="#3d5d7d" stroke-width="1.1"/></g></svg>

<!-- status bar -->
<div class="abs" style="left:0;top:716.5px;width:1546px;height:2px;background:#f6f6f6"></div>
<div class="abs" style="left:0;top:718px;width:1546px;height:14px;background:#f0f0f0;border-top:1px solid #dadada"></div>
<div class="abs" style="left:0;top:731px;width:1546px;height:1px;background:#dce6f4"></div>
<div class="status" style="left:3px">Ready</div>
<div class="abs" style="left:3px;top:721px;font-size:7.2px;color:#222;white-space:nowrap">Ready</div>
<div class="abs" style="left:843.3px;top:721px;font-size:7.2px;color:#222;white-space:nowrap">ANUM: 6</div>
<div class="abs" style="left:911px;top:718px;width:1px;height:12px;background:#d4d4d4"></div><div class="abs" style="left:912px;top:718px;width:1px;height:12px;background:#fafafa"></div>
<div class="abs" style="left:915px;top:721px;font-size:7.2px;color:#222;white-space:nowrap">TNUM: 40</div>
<div class="abs" style="left:990px;top:718px;width:1px;height:12px;background:#d4d4d4"></div><div class="abs" style="left:991px;top:718px;width:1px;height:12px;background:#fafafa"></div>
<div class="abs" style="left:994px;top:721px;font-size:7.2px;color:#222;white-space:nowrap">MPIX: { 38, 404}</div>
<div class="abs" style="left:1095.5px;top:718px;width:1px;height:12px;background:#d4d4d4"></div><div class="abs" style="left:1096.5px;top:718px;width:1px;height:12px;background:#fafafa"></div>
<div class="abs" style="left:1098.8px;top:721px;font-size:7.2px;color:#222;white-space:nowrap">MPOS: { -4, 182}</div>
<div class="abs" style="left:1221.3px;top:718px;width:1px;height:12px;background:#d4d4d4"></div><div class="abs" style="left:1222.3px;top:718px;width:1px;height:12px;background:#fafafa"></div>
<div class="abs" style="left:1224.6px;top:721px;font-size:7.2px;color:#222;white-space:nowrap">100&nbsp; cm</div>
<div class="abs" style="left:1275.7px;top:718px;width:1px;height:12px;background:#d4d4d4"></div><div class="abs" style="left:1276.7px;top:718px;width:1px;height:12px;background:#fafafa"></div>
<div class="abs" style="left:1279.6px;top:721px;font-size:7.2px;color:#222;white-space:nowrap">X&amp;Y</div>
<div class="abs" style="left:1308.3px;top:718px;width:1px;height:12px;background:#d4d4d4"></div><div class="abs" style="left:1309.3px;top:718px;width:1px;height:12px;background:#fafafa"></div>
<div class="abs" style="left:1311.7px;top:721px;font-size:7.2px;color:#222;white-space:nowrap">1:50</div>
<div class="abs" style="left:1360px;top:718px;width:1px;height:12px;background:#d4d4d4"></div><div class="abs" style="left:1361px;top:718px;width:1px;height:12px;background:#fafafa"></div>
<div class="abs" style="left:1363.9px;top:721px;font-size:7.2px;color:#222;white-space:nowrap">1 hour</div>
<div class="abs" style="left:1419.3px;top:718px;width:1px;height:12px;background:#d4d4d4"></div><div class="abs" style="left:1420.3px;top:718px;width:1px;height:12px;background:#fafafa"></div>
<div class="abs" style="left:1543px;top:718px;width:1px;height:12px;background:#d4d4d4"></div><div class="abs" style="left:1544px;top:718px;width:1px;height:12px;background:#fafafa"></div>
</body></html>
